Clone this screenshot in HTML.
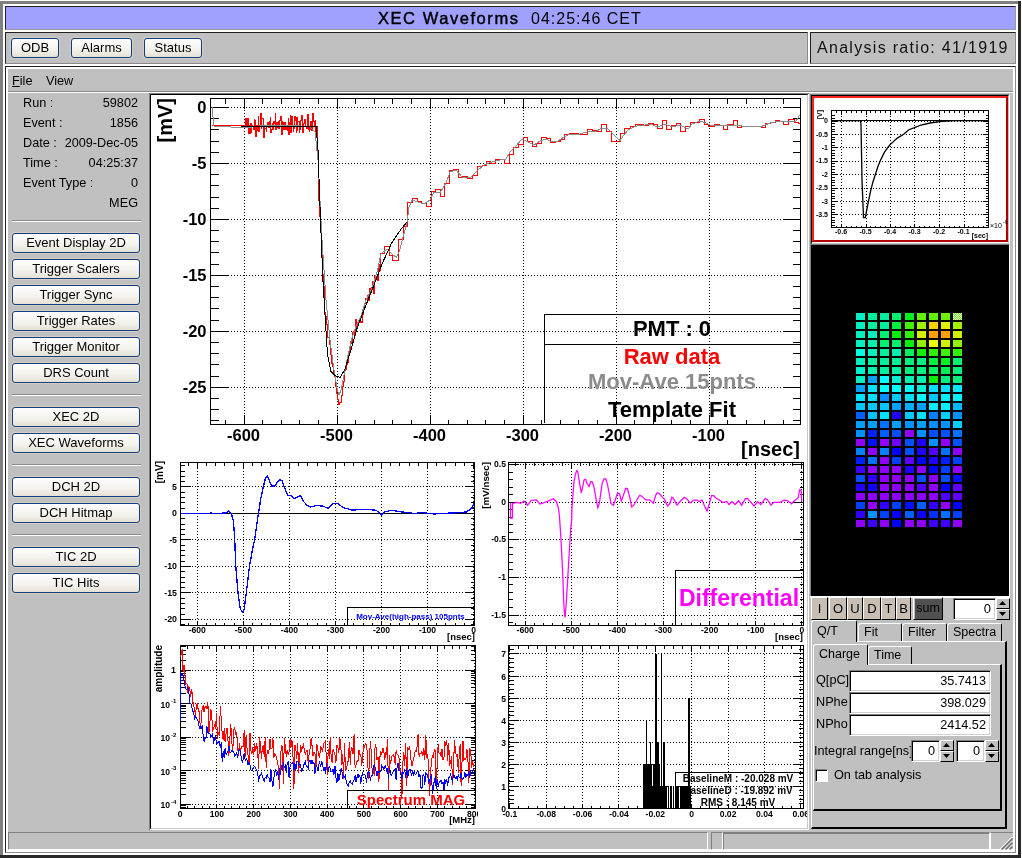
<!DOCTYPE html><html><head><meta charset="utf-8"><style>
*{margin:0;padding:0;box-sizing:border-box}
html,body{width:1022px;height:858px;overflow:hidden;-webkit-font-smoothing:antialiased;background:#c0c0c0;font-family:"Liberation Sans",sans-serif;color:#000}
.a{position:absolute}
.btn{position:absolute;border:1px solid #0f3f7f;border-radius:3px;background:linear-gradient(#ffffff,#f2f1ec 60%,#e6e1d6);box-shadow:0 0 0 1px #d4cfc4;font-size:13px;text-align:center;line-height:18px;white-space:nowrap}
.lbl{position:absolute;font-size:12.7px;white-space:nowrap;line-height:14px}
.sep{position:absolute;height:2px;border-top:1px solid #8a8a8a;border-bottom:1px solid #fff}
svg{position:absolute;left:0;top:0}
body>div,body>svg{will-change:transform}
</style></head><body><div class="a" style="left:0px;top:0px;width:1022px;height:858px;background:#fff"></div><div class="a" style="left:0px;top:1px;width:1021px;height:857px;background:#808080"></div><div class="a" style="left:0px;top:1px;width:1021px;height:857px;border-right:3px solid #282828;border-bottom:3px solid #282828"></div><div class="a" style="left:3px;top:4px;width:1015px;height:851px;background:#fff"></div><div class="a" style="left:5px;top:6px;width:1011px;height:24px;background:#a0a0ff;border-top:1px solid #202020;border-left:1px solid #202020;border-right:1px solid #9a9a9a;border-bottom:1px solid #9a9a9a"></div><div class="a" style="left:378px;top:8px;font-size:16.5px;line-height:20px;white-space:nowrap;color:#000;letter-spacing:1.55px;-webkit-text-stroke:0.45px #000">XEC Waveforms</div><div class="a" style="left:531px;top:9px;font-size:16px;line-height:20px;white-space:nowrap;color:#000;letter-spacing:1.0px">04:25:46 CET</div><div class="a" style="left:5px;top:32px;width:803px;height:32px;background:#c0c0c0;border-top:1px solid #202020;border-left:1px solid #202020;border-right:1px solid #8a8a8a;border-bottom:1px solid #8a8a8a"></div><div class="a" style="left:810px;top:32px;width:206px;height:32px;background:#c0c0c0;border-top:1px solid #202020;border-left:1px solid #202020;border-right:1px solid #8a8a8a;border-bottom:1px solid #8a8a8a"></div><div class="a" style="left:817px;top:38px;font-size:16px;line-height:20px;letter-spacing:1.3px;white-space:nowrap;color:#111">Analysis ratio: 41/1919</div><div class="btn" style="left:11px;top:38px;width:48px;height:20px">ODB</div><div class="btn" style="left:71px;top:38px;width:61px;height:20px">Alarms</div><div class="btn" style="left:144px;top:38px;width:58px;height:20px">Status</div><div class="a" style="left:5px;top:66px;width:1011px;height:787px;background:#fff;border-top:1px solid #202020;border-left:1px solid #202020;border-right:1px solid #8a8a8a;border-bottom:1px solid #8a8a8a"></div><div class="a" style="left:8px;top:69px;width:1005px;height:780px;background:#c0c0c0"></div><div class="a" style="left:8px;top:91px;width:1005px;height:1px;background:#8a8a8a"></div><div class="a" style="left:8px;top:92px;width:1005px;height:1px;background:#fff"></div><div class="lbl" style="left:12px;top:74px;font-size:12.7px"><u>F</u>ile</div><div class="lbl" style="left:46px;top:74px;font-size:12.7px">View</div><div class="lbl" style="left:23px;top:96px">Run :</div><div class="lbl" style="left:40px;top:96px;width:98px;text-align:right">59802</div><div class="lbl" style="left:23px;top:116px">Event :</div><div class="lbl" style="left:40px;top:116px;width:98px;text-align:right">1856</div><div class="lbl" style="left:23px;top:136px">Date :</div><div class="lbl" style="left:40px;top:136px;width:98px;text-align:right">2009-Dec-05</div><div class="lbl" style="left:23px;top:156px">Time :</div><div class="lbl" style="left:40px;top:156px;width:98px;text-align:right">04:25:37</div><div class="lbl" style="left:23px;top:176px">Event Type :</div><div class="lbl" style="left:40px;top:176px;width:98px;text-align:right">0</div><div class="lbl" style="left:23px;top:196px"></div><div class="lbl" style="left:40px;top:196px;width:98px;text-align:right">MEG</div><div class="sep" style="left:12px;top:220px;width:129px"></div><div class="sep" style="left:12px;top:394px;width:129px"></div><div class="sep" style="left:12px;top:464px;width:129px"></div><div class="sep" style="left:12px;top:534px;width:129px"></div><div class="btn" style="left:12px;top:233px;width:128px;height:20px">Event Display 2D</div><div class="btn" style="left:12px;top:259px;width:128px;height:20px">Trigger Scalers</div><div class="btn" style="left:12px;top:285px;width:128px;height:20px">Trigger Sync</div><div class="btn" style="left:12px;top:311px;width:128px;height:20px">Trigger Rates</div><div class="btn" style="left:12px;top:337px;width:128px;height:20px">Trigger Monitor</div><div class="btn" style="left:12px;top:363px;width:128px;height:20px">DRS Count</div><div class="btn" style="left:12px;top:407px;width:128px;height:20px">XEC 2D</div><div class="btn" style="left:12px;top:433px;width:128px;height:20px">XEC Waveforms</div><div class="btn" style="left:12px;top:477px;width:128px;height:20px">DCH 2D</div><div class="btn" style="left:12px;top:503px;width:128px;height:20px">DCH Hitmap</div><div class="btn" style="left:12px;top:547px;width:128px;height:20px">TIC 2D</div><div class="btn" style="left:12px;top:573px;width:128px;height:20px">TIC Hits</div><div class="a" style="left:149px;top:93px;width:660px;height:737px;background:#fff;border-top:1px solid #808080;border-left:1px solid #808080"></div><div class="a" style="left:150px;top:94px;width:658px;height:735px;background:#fff;border-top:1px solid #000;border-left:1px solid #000;border-right:1px solid #c8c8c8;border-bottom:1px solid #c8c8c8"></div><div class="a" style="left:8px;top:832px;width:700px;height:18px;border-top:1px solid #808080;border-left:1px solid #808080;border-right:1px solid #fff;border-bottom:1px solid #fff"></div><div class="a" style="left:711px;top:832px;width:12px;height:18px;border-top:1px solid #808080;border-left:1px solid #808080;border-right:1px solid #fff;border-bottom:1px solid #fff"></div><div class="a" style="left:723px;top:832px;width:267px;height:18px;border-top:2px solid #808080;border-left:1px solid #808080;border-right:1px solid #fff;border-bottom:1px solid #fff"></div><div class="a" style="left:990px;top:832px;width:23px;height:18px;border-top:1px solid #808080;border-left:1px solid #fff"></div><svg width="1022" height="858" style="position:absolute;left:0;top:0"><g stroke-width="1.4" fill="none"><path d="M1000 849.5L1012.5 837M1004.5 849.5L1012.5 841.5M1008.5 849.5L1012.5 845.5" stroke="#fff"/><path d="M1001.5 849.5L1012.5 838.5M1005.5 849.5L1012.5 842.5M1009.5 849.5L1012.5 846.5" stroke="#707070" stroke-width="1.6"/></g></svg><svg width="1022" height="858" viewBox="0 0 1022 858" style="position:absolute;left:0;top:0"><defs><clipPath id="cm"><rect x="151" y="95" width="656" height="364"/></clipPath><clipPath id="c2"><rect x="151" y="459" width="327" height="183"/></clipPath><clipPath id="c3"><rect x="478" y="459" width="329" height="183"/></clipPath><clipPath id="c4"><rect x="151" y="642" width="327" height="186"/></clipPath><clipPath id="c5"><rect x="478" y="642" width="329" height="186"/></clipPath></defs><g shape-rendering="crispEdges"><g clip-path="url(#cm)"><path d="M244.5 98V424M337.5 98V424M430.5 98V424M523.5 98V424M616.5 98V424M709.5 98V424M210 107.5H800M210 163.5H800M210 219.5H800M210 275.5H800M210 331.5H800M210 387.5H800" stroke="#000" stroke-width="1" stroke-dasharray="1,2" fill="none"/><path d="M244.5 424.5v-10M244.5 98.5v10M337.5 424.5v-10M337.5 98.5v10M430.5 424.5v-10M430.5 98.5v10M523.5 424.5v-10M523.5 98.5v10M616.5 424.5v-10M616.5 98.5v10M709.5 424.5v-10M709.5 98.5v10M225.5 424.5v-5M225.5 98.5v5M262.5 424.5v-5M262.5 98.5v5M281.5 424.5v-5M281.5 98.5v5M299.5 424.5v-5M299.5 98.5v5M318.5 424.5v-5M318.5 98.5v5M355.5 424.5v-5M355.5 98.5v5M374.5 424.5v-5M374.5 98.5v5M392.5 424.5v-5M392.5 98.5v5M411.5 424.5v-5M411.5 98.5v5M448.5 424.5v-5M448.5 98.5v5M467.5 424.5v-5M467.5 98.5v5M485.5 424.5v-5M485.5 98.5v5M504.5 424.5v-5M504.5 98.5v5M541.5 424.5v-5M541.5 98.5v5M560.5 424.5v-5M560.5 98.5v5M578.5 424.5v-5M578.5 98.5v5M597.5 424.5v-5M597.5 98.5v5M634.5 424.5v-5M634.5 98.5v5M653.5 424.5v-5M653.5 98.5v5M671.5 424.5v-5M671.5 98.5v5M690.5 424.5v-5M690.5 98.5v5M727.5 424.5v-5M727.5 98.5v5M746.5 424.5v-5M746.5 98.5v5M764.5 424.5v-5M764.5 98.5v5M783.5 424.5v-5M783.5 98.5v5M210.5 107.5h17M800.5 107.5h-17M210.5 163.5h17M800.5 163.5h-17M210.5 219.5h17M800.5 219.5h-17M210.5 275.5h17M800.5 275.5h-17M210.5 331.5h17M800.5 331.5h-17M210.5 387.5h17M800.5 387.5h-17M210.5 118.5h8M800.5 118.5h-8M210.5 129.5h8M800.5 129.5h-8M210.5 141.5h8M800.5 141.5h-8M210.5 152.5h8M800.5 152.5h-8M210.5 174.5h8M800.5 174.5h-8M210.5 185.5h8M800.5 185.5h-8M210.5 197.5h8M800.5 197.5h-8M210.5 208.5h8M800.5 208.5h-8M210.5 230.5h8M800.5 230.5h-8M210.5 241.5h8M800.5 241.5h-8M210.5 252.5h8M800.5 252.5h-8M210.5 264.5h8M800.5 264.5h-8M210.5 286.5h8M800.5 286.5h-8M210.5 297.5h8M800.5 297.5h-8M210.5 308.5h8M800.5 308.5h-8M210.5 320.5h8M800.5 320.5h-8M210.5 342.5h8M800.5 342.5h-8M210.5 353.5h8M800.5 353.5h-8M210.5 364.5h8M800.5 364.5h-8M210.5 376.5h8M800.5 376.5h-8M210.5 398.5h8M800.5 398.5h-8M210.5 409.5h8M800.5 409.5h-8M210.5 420.5h8M800.5 420.5h-8" stroke="#000" stroke-width="1" fill="none"/><rect x="210.5" y="98.5" width="590" height="326" stroke="#000" stroke-width="1" fill="none"/><text x="206.5" y="113.0" font-family="Liberation Sans" font-weight="bold" font-size="16.5" text-anchor="end" fill="#000" >0</text><text x="206.5" y="168.95" font-family="Liberation Sans" font-weight="bold" font-size="16.5" text-anchor="end" fill="#000" >-5</text><text x="206.5" y="224.89999999999998" font-family="Liberation Sans" font-weight="bold" font-size="16.5" text-anchor="end" fill="#000" >-10</text><text x="206.5" y="280.85" font-family="Liberation Sans" font-weight="bold" font-size="16.5" text-anchor="end" fill="#000" >-15</text><text x="206.5" y="336.79999999999995" font-family="Liberation Sans" font-weight="bold" font-size="16.5" text-anchor="end" fill="#000" >-20</text><text x="206.5" y="392.75" font-family="Liberation Sans" font-weight="bold" font-size="16.5" text-anchor="end" fill="#000" >-25</text><text x="243.5" y="441" font-family="Liberation Sans" font-weight="bold" font-size="16.5" text-anchor="middle" fill="#000" >-600</text><text x="336.5" y="441" font-family="Liberation Sans" font-weight="bold" font-size="16.5" text-anchor="middle" fill="#000" >-500</text><text x="429.5" y="441" font-family="Liberation Sans" font-weight="bold" font-size="16.5" text-anchor="middle" fill="#000" >-400</text><text x="522.5" y="441" font-family="Liberation Sans" font-weight="bold" font-size="16.5" text-anchor="middle" fill="#000" >-300</text><text x="615.5" y="441" font-family="Liberation Sans" font-weight="bold" font-size="16.5" text-anchor="middle" fill="#000" >-200</text><text x="708.5" y="441" font-family="Liberation Sans" font-weight="bold" font-size="16.5" text-anchor="middle" fill="#000" >-100</text><text x="0" y="0" transform="translate(172,98) rotate(-90)" font-family="Liberation Sans" font-weight="bold" font-size="20" text-anchor="end" fill="#000" >[mV]</text><text x="800" y="456" font-family="Liberation Sans" font-weight="bold" font-size="20" text-anchor="end" fill="#000" >[nsec]</text><path d="M211.0 125.0 L245.0 126.0 L245.0 118.8 L245.6 118.8 L245.6 127.6 L246.2 127.6 L246.2 118.2 L246.8 118.2 L246.8 125.1 L247.4 125.1 L247.4 118.8 L248.0 118.8 L248.0 118.4 L248.6 118.4 L248.6 133.9 L249.2 133.9 L249.2 125.0 L249.8 125.0 L249.8 133.3 L250.4 133.3 L250.4 123.7 L251.0 123.7 L251.0 132.2 L251.6 132.2 L251.6 126.1 L252.2 126.1 L252.2 125.6 L252.8 125.6 L252.8 126.9 L253.4 126.9 L253.4 129.2 L254.0 129.2 L254.0 119.9 L254.6 119.9 L254.6 122.3 L255.2 122.3 L255.2 120.3 L255.8 120.3 L255.8 136.0 L256.4 136.0 L256.4 125.2 L257.0 125.2 L257.0 126.1 L257.6 126.1 L257.6 130.0 L258.2 130.0 L258.2 116.9 L258.8 116.9 L258.8 131.7 L259.4 131.7 L259.4 125.6 L260.0 125.6 L260.0 125.4 L260.6 125.4 L260.6 113.0 L261.2 113.0 L261.2 128.4 L261.8 128.4 L261.8 118.9 L262.4 118.9 L262.4 118.6 L263.0 118.6 L263.0 118.5 L263.6 118.5 L263.6 137.8 L264.2 137.8 L264.2 125.6 L264.8 125.6 L264.8 128.0 L265.4 128.0 L265.4 128.6 L266.0 128.6 L266.0 131.8 L266.6 131.8 L266.6 125.2 L267.2 125.2 L267.2 122.6 L267.8 122.6 L267.8 122.2 L268.4 122.2 L268.4 127.3 L269.0 127.3 L269.0 127.0 L269.6 127.0 L269.6 121.1 L270.2 121.1 L270.2 117.0 L270.8 117.0 L270.8 132.2 L271.4 132.2 L271.4 129.3 L272.0 129.3 L272.0 125.2 L272.6 125.2 L272.6 123.3 L273.2 123.3 L273.2 129.6 L273.8 129.6 L273.8 121.9 L274.4 121.9 L274.4 123.5 L275.0 123.5 L275.0 113.0 L275.6 113.0 L275.6 129.5 L276.2 129.5 L276.2 127.8 L276.8 127.8 L276.8 122.9 L277.4 122.9 L277.4 127.2 L278.0 127.2 L278.0 121.7 L278.6 121.7 L278.6 128.9 L279.2 128.9 L279.2 124.2 L279.8 124.2 L279.8 120.9 L280.4 120.9 L280.4 116.1 L281.0 116.1 L281.0 126.1 L281.6 126.1 L281.6 134.1 L282.2 134.1 L282.2 121.7 L282.8 121.7 L282.8 122.9 L283.4 122.9 L283.4 129.1 L284.0 129.1 L284.0 127.2 L284.6 127.2 L284.6 122.1 L285.2 122.1 L285.2 122.6 L285.8 122.6 L285.8 129.8 L286.4 129.8 L286.4 126.0 L287.0 126.0 L287.0 127.9 L287.6 127.9 L287.6 130.2 L288.2 130.2 L288.2 118.0 L288.8 118.0 L288.8 134.3 L289.4 134.3 L289.4 122.9 L290.0 122.9 L290.0 115.6 L290.6 115.6 L290.6 132.7 L291.2 132.7 L291.2 116.0 L291.8 116.0 L291.8 116.6 L292.4 116.6 L292.4 126.5 L293.0 126.5 L293.0 131.7 L293.6 131.7 L293.6 128.6 L294.2 128.6 L294.2 124.8 L294.8 124.8 L294.8 116.9 L295.4 116.9 L295.4 120.5 L296.0 120.5 L296.0 132.2 L296.6 132.2 L296.6 117.1 L297.2 117.1 L297.2 130.3 L297.8 130.3 L297.8 121.7 L298.4 121.7 L298.4 121.7 L299.0 121.7 L299.0 132.4 L299.6 132.4 L299.6 129.3 L300.2 129.3 L300.2 124.8 L300.8 124.8 L300.8 120.1 L301.4 120.1 L301.4 115.7 L302.0 115.7 L302.0 129.3 L302.6 129.3 L302.6 132.8 L303.2 132.8 L303.2 126.9 L303.8 126.9 L303.8 123.4 L304.4 123.4 L304.4 119.4 L305.0 119.4 L305.0 125.5 L305.6 125.5 L305.6 126.3 L306.2 126.3 L306.2 126.5 L306.8 126.5 L306.8 128.7 L307.4 128.7 L307.4 114.7 L308.0 114.7 L308.0 129.6 L308.6 129.6 L308.6 127.4 L309.2 127.4 L309.2 131.0 L309.8 131.0 L309.8 129.5 L310.4 129.5 L310.4 121.8 L311.0 121.8 L311.0 129.7 L311.6 129.7 L311.6 130.4 L312.2 130.4 L312.2 122.3 L312.8 122.3 L312.8 113.0 L313.4 113.0 L313.4 121.3 L314.0 121.3 L314.0 126.8 L314.6 126.8 L314.6 121.0 L315.2 121.0 L315.2 120.9 L315.8 120.9 L315.8 131.5 L316.4 131.5 L316.0 126.0 L317.0 126.0 L317.0 150.0 L318.0 150.0 L318.0 200.0 L319.0 200.0 L319.0 216.0 L320.0 216.0 L320.0 232.0 L321.0 232.0 L321.0 251.3 L322.0 251.3 L322.0 274.4 L323.0 274.4 L323.0 286.2 L324.0 286.2 L324.0 312.5 L325.0 312.5 L325.0 316.1 L326.0 316.1 L326.0 324.1 L327.0 324.1 L327.0 337.8 L328.0 337.8 L328.0 337.9 L329.0 337.9 L329.0 344.0 L330.0 344.0 L330.0 354.6 L331.0 354.6 L331.0 363.9 L332.0 363.9 L332.0 366.0 L333.0 366.0 L333.0 374.2 L334.0 374.2 L334.0 376.1 L335.0 376.1 L335.0 386.0 L336.0 386.0 L336.0 393.9 L337.0 393.9 L337.0 399.3 L338.0 399.3 L338.0 404.7 L339.0 404.7 L339.0 402.3 L340.0 402.3 L340.0 402.5 L341.0 402.5 L341.0 395.6 L342.0 395.6 L342.0 386.8 L343.0 386.8 L343.0 381.0 L344.0 381.0 L344.0 370.5 L345.0 370.5 L345.0 369.3 L346.0 369.3 L346.0 364.8 L347.0 364.8 L347.0 362.9 L348.0 362.9 L348.0 353.5 L349.0 353.5 L349.0 351.4 L350.0 351.4 L350.0 341.9 L351.0 341.9 L351.0 343.3 L352.0 343.3 L352.0 332.9 L353.0 332.9 L353.0 331.2 L354.0 331.2 L354.0 335.6 L355.0 335.6 L355.0 319.5 L356.0 319.5 L356.0 327.2 L357.0 327.2 L357.0 324.3 L358.0 324.3 L358.0 320.9 L359.0 320.9 L359.0 322.4 L360.0 322.4 L360.0 321.4 L361.0 321.4 L361.0 322.0 L362.0 322.0 L362.0 314.0 L363.0 314.0 L363.0 308.2 L364.0 308.2 L364.0 303.5 L365.0 303.5 L365.0 298.2 L366.0 298.2 L366.0 299.8 L367.0 299.8 L367.0 295.4 L368.0 295.4 L368.0 300.2 L369.0 300.2 L369.0 288.2 L370.0 288.2 L370.0 289.0 L371.0 289.0 L371.0 287.6 L372.0 287.6 L372.0 281.6 L373.0 281.6 L373.0 293.7 L374.0 293.7 L374.0 275.5 L375.0 275.5 L375.0 279.9 L376.0 279.9 L376.0 276.0 L377.0 276.0 L377.0 280.6 L378.0 280.6 L378.0 264.2 L379.0 264.2 L379.0 270.3 L380.0 270.3 L380.0 253.8 L384.6 253.8 L384.6 246.8 L389.3 246.8 L389.3 255.0 L392.8 255.0 L392.8 260.8 L398.6 260.8 L398.6 239.8 L403.4 239.8 L403.4 226.7 L407.5 226.7 L407.5 202.9 L412.2 202.9 L412.2 198.8 L417.3 198.8 L417.3 201.4 L421.8 201.4 L421.8 203.5 L426.6 203.5 L426.6 206.2 L431.7 206.2 L431.7 191.8 L435.6 191.8 L435.6 189.7 L440.3 189.7 L440.3 196.3 L444.4 196.3 L444.4 183.6 L449.5 183.6 L449.5 170.6 L453.7 170.6 L453.7 169.6 L458.4 169.6 L458.4 177.8 L462.9 177.8 L462.9 176.8 L467.7 176.8 L467.7 178.8 L472.6 178.8 L472.6 175.3 L477.3 175.3 L477.3 166.5 L482.1 166.5 L482.1 165.0 L486.6 165.0 L486.6 161.8 L490.7 161.8 L490.7 163.8 L495.2 163.8 L495.2 159.7 L499.9 159.7 L499.9 159.3 L504.4 159.3 L504.4 163.8 L509.6 163.8 L509.6 154.8 L513.3 154.8 L513.3 147.0 L518.4 147.0 L518.4 144.9 L523.1 144.9 L523.1 137.7 L527.7 137.7 L527.7 141.8 L532.2 141.8 L532.2 146.0 L536.9 146.0 L536.9 143.9 L541.6 143.9 L541.6 137.7 L546.2 137.7 L546.2 138.8 L550.7 138.8 L550.7 142.9 L555.4 142.9 L555.4 141.2 L560.1 141.2 L560.1 139.8 L564.6 139.8 L564.6 134.7 L569.2 134.7 L569.2 133.6 L573.9 133.6 L573.9 133.6 L578.6 133.6 L578.6 134.2 L583.1 134.2 L583.1 134.2 L587.6 134.2 L587.6 129.9 L592.4 129.9 L592.4 130.1 L597.4 130.1 L597.4 131.6 L601.6 131.6 L601.6 124.8 L606.4 124.8 L606.4 131.6 L611.0 131.6 L611.0 141.4 L620.5 141.4 L620.5 133.7 L624.7 133.7 L624.7 128.4 L630.0 128.4 L630.0 126.7 L635.2 126.7 L635.2 124.8 L643.6 124.8 L643.6 125.7 L648.9 125.7 L648.9 123.6 L653.1 123.6 L653.1 124.8 L657.3 124.8 L657.3 128.0 L662.6 128.0 L662.6 120.4 L666.8 120.4 L666.8 129.0 L671.6 129.0 L671.6 125.7 L676.3 125.7 L676.3 123.6 L680.5 123.6 L680.5 131.1 L685.7 131.1 L685.7 126.9 L690.6 126.9 L690.6 122.5 L699.4 122.5 L699.4 119.6 L704.7 119.6 L704.7 124.8 L708.9 124.8 L708.9 126.9 L714.1 126.9 L714.1 124.8 L719.4 124.8 L719.4 125.7 L723.6 125.7 L723.6 129.0 L727.8 129.0 L727.8 124.2 L733.0 124.2 L733.0 120.4 L737.3 120.4 L737.3 127.0 L741.9 127.0 L741.9 126.7 L761.5 126.7 L761.5 127.0 L765.7 127.0 L765.7 123.1 L770.9 123.1 L770.9 122.7 L775.2 122.7 L775.2 120.0 L779.4 120.0 L779.4 121.5 L783.6 121.5 L783.6 124.2 L788.8 124.2 L788.8 119.4 L794.1 119.4 L794.1 122.1 L798.3 122.1 L798.3 123.1 L800.0 123.1" stroke="#ff0000" stroke-width="1" fill="none" shape-rendering="crispEdges"/><path d="M212.5 107.5 L213.5 126.0 L240.0 127.5 L245.0 128.0 L260.0 126.0 L280.0 125.0 L300.0 126.0 L310.0 127.0 L315.0 132.0 L318.0 160.0 L322.0 240.0 L326.0 300.0 L330.0 340.0 L334.0 370.0 L337.0 388.0 L339.0 395.0 L341.0 390.0 L344.0 375.0 L348.0 355.0 L352.0 338.0 L356.0 326.0 L361.0 316.0 L366.0 300.0 L372.0 288.0 L377.6 270.0 L381.0 253.8 L387.0 249.0 L391.6 253.8 L396.2 257.3 L399.7 250.3 L403.2 236.3 L406.7 224.7 L409.0 207.0 L412.0 200.0 L418.0 202.0 L424.0 204.0 L430.0 200.0 L434.0 192.0 L440.0 193.0 L446.0 183.0 L450.0 172.0 L456.0 170.0 L462.0 177.0 L470.0 178.0 L478.0 170.0 L484.0 165.0 L492.0 162.0 L500.0 160.0 L506.0 159.0 L510.0 152.0 L516.0 146.0 L522.0 139.0 L528.0 142.0 L534.0 145.0 L540.0 141.0 L546.0 139.0 L552.0 142.0 L558.0 141.0 L564.0 137.0 L570.0 134.0 L580.0 134.0 L590.0 131.0 L597.0 131.0 L602.0 128.0 L607.0 128.0 L612.0 133.0 L616.0 137.0 L620.0 140.5 L624.0 135.0 L628.0 130.0 L634.0 127.0 L640.0 125.0 L645.0 125.0 L650.0 124.0 L658.0 127.0 L665.0 124.0 L672.0 127.0 L680.0 125.0 L688.0 129.0 L692.0 124.0 L700.0 121.0 L706.0 123.0 L712.0 126.0 L722.0 125.0 L742.0 126.0 L760.0 127.0 L770.0 123.0 L780.0 121.0 L790.0 121.0 L796.0 121.0 L800.0 114.7" stroke="#8c8c8c" stroke-width="1" fill="none" /><path d="M241.0 126.3 L316.0 126.3 L318.0 150.0 L320.5 220.0 L322.8 278.0 L325.2 318.0 L327.5 355.0 L331.0 371.5 L335.6 376.0 L340.3 377.3 L345.0 369.0 L350.8 350.5 L356.6 329.6 L363.6 311.0 L373.0 287.6 L382.0 264.0 L391.6 243.0 L401.0 229.3 L407.0 222.0" stroke="#000" stroke-width="1" fill="none" shape-rendering="crispEdges"/><path d="M544.5 423V314.5H800M544.5 344.5H800" stroke="#000" stroke-width="1" fill="none" shape-rendering="crispEdges"/><text x="672" y="336" font-family="Liberation Sans" font-weight="bold" font-size="22" text-anchor="middle" fill="#000" >PMT : 0</text><text x="672" y="364" font-family="Liberation Sans" font-weight="bold" font-size="22" text-anchor="middle" fill="#ff0000" >Raw data</text><text x="672" y="389" font-family="Liberation Sans" font-weight="bold" font-size="22" text-anchor="middle" fill="#8c8c8c" >Mov-Ave 15pnts</text><text x="672" y="417" font-family="Liberation Sans" font-weight="bold" font-size="22" text-anchor="middle" fill="#000" >Template Fit</text></g><g clip-path="url(#c2)"><path d="M197.5 462V625M243.5 462V625M289.5 462V625M335.5 462V625M381.5 462V625M427.5 462V625M473.5 462V625M180 486.5H474M180 513.5H474M180 539.5H474M180 566.5H474M180 592.5H474M180 619.5H474" stroke="#000" stroke-width="1" stroke-dasharray="1,2" fill="none"/><path d="M197.5 625.5v-5M197.5 462.5v5M243.5 625.5v-5M243.5 462.5v5M289.5 625.5v-5M289.5 462.5v5M335.5 625.5v-5M335.5 462.5v5M381.5 625.5v-5M381.5 462.5v5M427.5 625.5v-5M427.5 462.5v5M473.5 625.5v-5M473.5 462.5v5M188.5 625.5v-3M188.5 462.5v3M206.5 625.5v-3M206.5 462.5v3M215.5 625.5v-3M215.5 462.5v3M224.5 625.5v-3M224.5 462.5v3M234.5 625.5v-3M234.5 462.5v3M252.5 625.5v-3M252.5 462.5v3M261.5 625.5v-3M261.5 462.5v3M270.5 625.5v-3M270.5 462.5v3M280.5 625.5v-3M280.5 462.5v3M298.5 625.5v-3M298.5 462.5v3M307.5 625.5v-3M307.5 462.5v3M317.5 625.5v-3M317.5 462.5v3M326.5 625.5v-3M326.5 462.5v3M344.5 625.5v-3M344.5 462.5v3M353.5 625.5v-3M353.5 462.5v3M363.5 625.5v-3M363.5 462.5v3M372.5 625.5v-3M372.5 462.5v3M390.5 625.5v-3M390.5 462.5v3M399.5 625.5v-3M399.5 462.5v3M409.5 625.5v-3M409.5 462.5v3M418.5 625.5v-3M418.5 462.5v3M436.5 625.5v-3M436.5 462.5v3M445.5 625.5v-3M445.5 462.5v3M455.5 625.5v-3M455.5 462.5v3M464.5 625.5v-3M464.5 462.5v3M180.5 486.5h10M474.5 486.5h-10M180.5 513.5h10M474.5 513.5h-10M180.5 539.5h10M474.5 539.5h-10M180.5 566.5h10M474.5 566.5h-10M180.5 592.5h10M474.5 592.5h-10M180.5 619.5h10M474.5 619.5h-10M180.5 465.5h4M474.5 465.5h-4M180.5 471.5h4M474.5 471.5h-4M180.5 476.5h4M474.5 476.5h-4M180.5 481.5h4M474.5 481.5h-4M180.5 492.5h4M474.5 492.5h-4M180.5 497.5h4M474.5 497.5h-4M180.5 502.5h4M474.5 502.5h-4M180.5 508.5h4M474.5 508.5h-4M180.5 518.5h4M474.5 518.5h-4M180.5 524.5h4M474.5 524.5h-4M180.5 529.5h4M474.5 529.5h-4M180.5 534.5h4M474.5 534.5h-4M180.5 545.5h4M474.5 545.5h-4M180.5 550.5h4M474.5 550.5h-4M180.5 555.5h4M474.5 555.5h-4M180.5 561.5h4M474.5 561.5h-4M180.5 571.5h4M474.5 571.5h-4M180.5 577.5h4M474.5 577.5h-4M180.5 582.5h4M474.5 582.5h-4M180.5 587.5h4M474.5 587.5h-4M180.5 598.5h4M474.5 598.5h-4M180.5 603.5h4M474.5 603.5h-4M180.5 608.5h4M474.5 608.5h-4M180.5 614.5h4M474.5 614.5h-4M180.5 624.5h4M474.5 624.5h-4" stroke="#000" stroke-width="1" fill="none"/><rect x="180.5" y="462.5" width="294" height="163" stroke="#000" stroke-width="1" fill="none"/><text x="177" y="489.7" font-family="Liberation Sans" font-weight="bold" font-size="8.8" text-anchor="end" fill="#000" >5</text><text x="177" y="516.1999999999999" font-family="Liberation Sans" font-weight="bold" font-size="8.8" text-anchor="end" fill="#000" >0</text><text x="177" y="542.6999999999999" font-family="Liberation Sans" font-weight="bold" font-size="8.8" text-anchor="end" fill="#000" >-5</text><text x="177" y="569.1999999999999" font-family="Liberation Sans" font-weight="bold" font-size="8.8" text-anchor="end" fill="#000" >-10</text><text x="177" y="595.6999999999999" font-family="Liberation Sans" font-weight="bold" font-size="8.8" text-anchor="end" fill="#000" >-15</text><text x="177" y="622.1999999999999" font-family="Liberation Sans" font-weight="bold" font-size="8.8" text-anchor="end" fill="#000" >-20</text><text x="197.3" y="633" font-family="Liberation Sans" font-weight="bold" font-size="8.6" text-anchor="middle" fill="#000" >-600</text><text x="243.35000000000002" y="633" font-family="Liberation Sans" font-weight="bold" font-size="8.6" text-anchor="middle" fill="#000" >-500</text><text x="289.4" y="633" font-family="Liberation Sans" font-weight="bold" font-size="8.6" text-anchor="middle" fill="#000" >-400</text><text x="335.45000000000005" y="633" font-family="Liberation Sans" font-weight="bold" font-size="8.6" text-anchor="middle" fill="#000" >-300</text><text x="381.5" y="633" font-family="Liberation Sans" font-weight="bold" font-size="8.6" text-anchor="middle" fill="#000" >-200</text><text x="427.55" y="633" font-family="Liberation Sans" font-weight="bold" font-size="8.6" text-anchor="middle" fill="#000" >-100</text><text x="473.6" y="633" font-family="Liberation Sans" font-weight="bold" font-size="8.6" text-anchor="middle" fill="#000" >0</text><text x="0" y="0" transform="translate(163,461) rotate(-90)" font-family="Liberation Sans" font-weight="bold" font-size="10" text-anchor="end" fill="#000" >[mV]</text><text x="475" y="639.5" font-family="Liberation Sans" font-weight="bold" font-size="9.5" text-anchor="end" fill="#000" >[nsec]</text><path d="M181 513.5H474" stroke="#000" stroke-width="1" shape-rendering="crispEdges"/><path d="M180.5 513.5 L209.7 513.5 L211.0 512.5 L213.0 513.5 L226.0 513.0 L228.6 511.2 L231.2 513.3 L233.5 521.2 L234.7 539.4 L235.8 566.7 L238.0 592.4 L240.3 609.1 L242.6 612.1 L244.1 609.1 L246.4 592.4 L249.4 566.7 L252.4 550.0 L254.7 539.4 L257.0 522.7 L259.2 509.1 L260.5 500.0 L263.0 488.0 L265.5 478.0 L267.6 476.0 L271.5 485.9 L274.7 485.9 L279.6 479.4 L282.0 480.5 L284.5 487.5 L287.7 495.6 L291.0 495.6 L294.2 498.9 L297.5 497.0 L300.7 495.6 L304.0 502.0 L307.2 505.4 L310.4 507.0 L317.0 505.4 L323.5 506.3 L328.3 508.6 L333.2 503.7 L338.0 503.7 L343.0 507.6 L352.7 510.2 L359.0 509.6 L369.0 509.6 L375.5 510.2 L378.7 511.9 L381.9 515.0 L385.0 511.9 L391.7 510.2 L401.4 511.9 L408.0 512.5 L414.4 513.5 L421.0 512.5 L433.9 514.0 L440.0 513.5 L456.6 512.8 L466.4 511.9 L471.3 508.6 L473.9 503.7" stroke="#0000ff" stroke-width="1.3" fill="none" /><path d="M347.5 625V607.5H474" stroke="#000" stroke-width="1" fill="none" shape-rendering="crispEdges"/><text x="410.5" y="619" font-family="Liberation Sans" font-weight="bold" font-size="8" text-anchor="middle" fill="#0000ff" >Mov-Ave(high-pass) 105pnts</text></g><g clip-path="url(#c3)"><path d="M525.5 462V625M571.5 462V625M617.5 462V625M663.5 462V625M709.5 462V625M755.5 462V625M801.5 462V625M508 464.5H803M508 502.5H803M508 539.5H803M508 577.5H803M508 615.5H803" stroke="#000" stroke-width="1" stroke-dasharray="1,2" fill="none"/><path d="M525.5 625.5v-5M525.5 462.5v5M571.5 625.5v-5M571.5 462.5v5M617.5 625.5v-5M617.5 462.5v5M663.5 625.5v-5M663.5 462.5v5M709.5 625.5v-5M709.5 462.5v5M755.5 625.5v-5M755.5 462.5v5M801.5 625.5v-5M801.5 462.5v5M515.5 625.5v-3M515.5 462.5v3M534.5 625.5v-3M534.5 462.5v3M543.5 625.5v-3M543.5 462.5v3M552.5 625.5v-3M552.5 462.5v3M562.5 625.5v-3M562.5 462.5v3M580.5 625.5v-3M580.5 462.5v3M589.5 625.5v-3M589.5 462.5v3M598.5 625.5v-3M598.5 462.5v3M608.5 625.5v-3M608.5 462.5v3M626.5 625.5v-3M626.5 462.5v3M635.5 625.5v-3M635.5 462.5v3M645.5 625.5v-3M645.5 462.5v3M654.5 625.5v-3M654.5 462.5v3M672.5 625.5v-3M672.5 462.5v3M681.5 625.5v-3M681.5 462.5v3M691.5 625.5v-3M691.5 462.5v3M700.5 625.5v-3M700.5 462.5v3M718.5 625.5v-3M718.5 462.5v3M728.5 625.5v-3M728.5 462.5v3M737.5 625.5v-3M737.5 462.5v3M746.5 625.5v-3M746.5 462.5v3M764.5 625.5v-3M764.5 462.5v3M774.5 625.5v-3M774.5 462.5v3M783.5 625.5v-3M783.5 462.5v3M792.5 625.5v-3M792.5 462.5v3M508.5 464.5h10M803.5 464.5h-10M508.5 502.5h10M803.5 502.5h-10M508.5 539.5h10M803.5 539.5h-10M508.5 577.5h10M803.5 577.5h-10M508.5 615.5h10M803.5 615.5h-10M508.5 472.5h4M803.5 472.5h-4M508.5 479.5h4M803.5 479.5h-4M508.5 487.5h4M803.5 487.5h-4M508.5 494.5h4M803.5 494.5h-4M508.5 509.5h4M803.5 509.5h-4M508.5 517.5h4M803.5 517.5h-4M508.5 524.5h4M803.5 524.5h-4M508.5 532.5h4M803.5 532.5h-4M508.5 547.5h4M803.5 547.5h-4M508.5 554.5h4M803.5 554.5h-4M508.5 562.5h4M803.5 562.5h-4M508.5 569.5h4M803.5 569.5h-4M508.5 584.5h4M803.5 584.5h-4M508.5 592.5h4M803.5 592.5h-4M508.5 599.5h4M803.5 599.5h-4M508.5 607.5h4M803.5 607.5h-4M508.5 622.5h4M803.5 622.5h-4" stroke="#000" stroke-width="1" fill="none"/><rect x="508.5" y="462.5" width="295" height="163" stroke="#000" stroke-width="1" fill="none"/><text x="506" y="467.09999999999997" font-family="Liberation Sans" font-weight="bold" font-size="8.6" text-anchor="end" fill="#000" >0.5</text><text x="506" y="504.7" font-family="Liberation Sans" font-weight="bold" font-size="8.6" text-anchor="end" fill="#000" >0</text><text x="506" y="542.3" font-family="Liberation Sans" font-weight="bold" font-size="8.6" text-anchor="end" fill="#000" >-0.5</text><text x="506" y="579.9" font-family="Liberation Sans" font-weight="bold" font-size="8.6" text-anchor="end" fill="#000" >-1</text><text x="506" y="617.5" font-family="Liberation Sans" font-weight="bold" font-size="8.6" text-anchor="end" fill="#000" >-1.5</text><text x="525.1999999999999" y="633" font-family="Liberation Sans" font-weight="bold" font-size="8.6" text-anchor="middle" fill="#000" >-600</text><text x="571.3" y="633" font-family="Liberation Sans" font-weight="bold" font-size="8.6" text-anchor="middle" fill="#000" >-500</text><text x="617.4" y="633" font-family="Liberation Sans" font-weight="bold" font-size="8.6" text-anchor="middle" fill="#000" >-400</text><text x="663.5" y="633" font-family="Liberation Sans" font-weight="bold" font-size="8.6" text-anchor="middle" fill="#000" >-300</text><text x="709.5999999999999" y="633" font-family="Liberation Sans" font-weight="bold" font-size="8.6" text-anchor="middle" fill="#000" >-200</text><text x="755.6999999999999" y="633" font-family="Liberation Sans" font-weight="bold" font-size="8.6" text-anchor="middle" fill="#000" >-100</text><text x="801.8" y="633" font-family="Liberation Sans" font-weight="bold" font-size="8.6" text-anchor="middle" fill="#000" >0</text><text x="0" y="0" transform="translate(489,462) rotate(-90)" font-family="Liberation Sans" font-weight="bold" font-size="9.8" text-anchor="end" fill="#000" >[mV/nsec]</text><text x="803" y="639.5" font-family="Liberation Sans" font-weight="bold" font-size="9.5" text-anchor="end" fill="#000" >[nsec]</text><path d="M510.5 503.0 L510.5 518.0 L512.5 518.0 L512.5 503.4 L517.6 502.3 L520.5 503.4 L524.0 501.1 L527.6 505.2 L531.1 500.5 L536.4 499.9 L539.9 504.0 L543.4 502.9 L548.1 501.1 L553.4 498.7 L556.4 501.7 L558.2 507.0 L559.4 515.2 L560.8 536.2 L562.5 568.7 L564.0 607.7 L565.0 617.4 L566.4 601.2 L568.3 568.7 L570.6 529.7 L571.7 520.0 L572.0 507.0 L572.9 495.2 L574.0 481.7 L575.2 475.3 L576.6 470.6 L577.8 471.7 L578.7 477.6 L579.9 485.2 L581.3 492.9 L582.5 488.2 L584.0 480.0 L585.6 479.4 L587.0 483.5 L589.1 486.4 L590.7 481.7 L592.2 481.7 L593.8 486.4 L595.2 494.0 L596.4 501.1 L597.8 507.6 L599.3 503.4 L600.8 492.9 L602.2 483.5 L604.0 478.8 L605.8 478.8 L607.5 484.7 L609.3 494.0 L611.0 503.4 L613.4 505.2 L615.1 500.5 L617.5 492.9 L619.6 494.0 L621.3 501.1 L623.4 495.2 L625.7 488.2 L627.5 488.8 L629.8 497.6 L631.6 507.0 L633.9 505.2 L637.5 498.7 L639.8 495.2 L642.1 496.4 L645.7 499.9 L649.8 499.9 L653.3 503.4 L655.7 495.2 L657.2 492.8 L659.4 493.5 L662.3 497.2 L664.5 499.4 L667.5 506.0 L669.7 503.8 L671.9 497.2 L673.3 497.9 L677.0 505.2 L680.7 500.8 L684.4 497.2 L686.6 498.6 L690.2 503.0 L693.9 500.1 L697.6 500.1 L699.0 501.6 L702.0 500.1 L704.2 505.2 L707.1 511.1 L709.3 503.8 L711.5 495.7 L713.7 495.7 L716.6 498.6 L719.6 500.1 L722.5 502.3 L726.9 501.6 L729.1 504.5 L732.1 501.6 L735.0 504.5 L738.7 500.8 L741.6 505.2 L745.3 498.6 L747.5 498.6 L750.4 501.6 L754.1 506.0 L757.7 501.6 L760.7 504.5 L765.1 498.6 L767.3 499.4 L771.0 505.2 L773.9 502.3 L779.8 502.3 L784.2 500.1 L787.8 500.8 L791.5 503.8 L794.4 500.8 L798.1 498.0 L799.6 489.8 L801.0 490.5 L801.8 501.6" stroke="#ff00ff" stroke-width="1.25" fill="none" shape-rendering="auto"/><path d="M675.5 625V570.5H803" stroke="#000" stroke-width="1" fill="none" shape-rendering="crispEdges"/><text x="739" y="606" font-family="Liberation Sans" font-weight="bold" font-size="23" text-anchor="middle" fill="#ff00ff" >Differential</text></g><g clip-path="url(#c4)"><path d="M216.5 645V808M253.5 645V808M290.5 645V808M327.5 645V808M363.5 645V808M400.5 645V808M437.5 645V808M474.5 645V808M180 670.5H475M180 703.5H475M180 737.5H475M180 770.5H475M180 804.5H475" stroke="#000" stroke-width="1" stroke-dasharray="1,2" fill="none"/><path d="M180.5 808.5v-5M180.5 645.5v5M216.5 808.5v-5M216.5 645.5v5M253.5 808.5v-5M253.5 645.5v5M290.5 808.5v-5M290.5 645.5v5M327.5 808.5v-5M327.5 645.5v5M363.5 808.5v-5M363.5 645.5v5M400.5 808.5v-5M400.5 645.5v5M437.5 808.5v-5M437.5 645.5v5M474.5 808.5v-5M474.5 645.5v5M187.5 808.5v-3M187.5 645.5v3M194.5 808.5v-3M194.5 645.5v3M202.5 808.5v-3M202.5 645.5v3M209.5 808.5v-3M209.5 645.5v3M224.5 808.5v-3M224.5 645.5v3M231.5 808.5v-3M231.5 645.5v3M239.5 808.5v-3M239.5 645.5v3M246.5 808.5v-3M246.5 645.5v3M261.5 808.5v-3M261.5 645.5v3M268.5 808.5v-3M268.5 645.5v3M275.5 808.5v-3M275.5 645.5v3M283.5 808.5v-3M283.5 645.5v3M297.5 808.5v-3M297.5 645.5v3M305.5 808.5v-3M305.5 645.5v3M312.5 808.5v-3M312.5 645.5v3M319.5 808.5v-3M319.5 645.5v3M334.5 808.5v-3M334.5 645.5v3M341.5 808.5v-3M341.5 645.5v3M349.5 808.5v-3M349.5 645.5v3M356.5 808.5v-3M356.5 645.5v3M371.5 808.5v-3M371.5 645.5v3M378.5 808.5v-3M378.5 645.5v3M386.5 808.5v-3M386.5 645.5v3M393.5 808.5v-3M393.5 645.5v3M408.5 808.5v-3M408.5 645.5v3M415.5 808.5v-3M415.5 645.5v3M422.5 808.5v-3M422.5 645.5v3M430.5 808.5v-3M430.5 645.5v3M444.5 808.5v-3M444.5 645.5v3M452.5 808.5v-3M452.5 645.5v3M459.5 808.5v-3M459.5 645.5v3M466.5 808.5v-3M466.5 645.5v3M180.5 670.5h10M475.5 670.5h-10M180.5 703.5h10M475.5 703.5h-10M180.5 737.5h10M475.5 737.5h-10M180.5 770.5h10M475.5 770.5h-10M180.5 804.5h10M475.5 804.5h-10M180.5 807.5h5M475.5 807.5h-5M180.5 805.5h5M475.5 805.5h-5M180.5 794.5h5M475.5 794.5h-5M180.5 788.5h5M475.5 788.5h-5M180.5 783.5h5M475.5 783.5h-5M180.5 780.5h5M475.5 780.5h-5M180.5 778.5h5M475.5 778.5h-5M180.5 775.5h5M475.5 775.5h-5M180.5 773.5h5M475.5 773.5h-5M180.5 772.5h5M475.5 772.5h-5M180.5 760.5h5M475.5 760.5h-5M180.5 754.5h5M475.5 754.5h-5M180.5 750.5h5M475.5 750.5h-5M180.5 747.5h5M475.5 747.5h-5M180.5 744.5h5M475.5 744.5h-5M180.5 742.5h5M475.5 742.5h-5M180.5 740.5h5M475.5 740.5h-5M180.5 738.5h5M475.5 738.5h-5M180.5 727.5h5M475.5 727.5h-5M180.5 721.5h5M475.5 721.5h-5M180.5 717.5h5M475.5 717.5h-5M180.5 713.5h5M475.5 713.5h-5M180.5 711.5h5M475.5 711.5h-5M180.5 708.5h5M475.5 708.5h-5M180.5 706.5h5M475.5 706.5h-5M180.5 705.5h5M475.5 705.5h-5M180.5 693.5h5M475.5 693.5h-5M180.5 687.5h5M475.5 687.5h-5M180.5 683.5h5M475.5 683.5h-5M180.5 680.5h5M475.5 680.5h-5M180.5 677.5h5M475.5 677.5h-5M180.5 675.5h5M475.5 675.5h-5M180.5 673.5h5M475.5 673.5h-5M180.5 671.5h5M475.5 671.5h-5M180.5 660.5h5M475.5 660.5h-5M180.5 654.5h5M475.5 654.5h-5M180.5 650.5h5M475.5 650.5h-5M180.5 646.5h5M475.5 646.5h-5" stroke="#000" stroke-width="1" fill="none"/><rect x="180.5" y="645.5" width="295" height="163" stroke="#000" stroke-width="1" fill="none"/><text x="176" y="672.8" font-family="Liberation Sans" font-weight="bold" font-size="8.8" text-anchor="end" fill="#000" >1</text><text x="170" y="707.75" font-family="Liberation Sans" font-weight="bold" font-size="8.6" text-anchor="end">10</text><text x="171" y="703.25" font-family="Liberation Sans" font-weight="bold" font-size="6" text-anchor="start">-1</text><text x="170" y="741.1999999999999" font-family="Liberation Sans" font-weight="bold" font-size="8.6" text-anchor="end">10</text><text x="171" y="736.6999999999999" font-family="Liberation Sans" font-weight="bold" font-size="6" text-anchor="start">-2</text><text x="170" y="774.65" font-family="Liberation Sans" font-weight="bold" font-size="8.6" text-anchor="end">10</text><text x="171" y="770.15" font-family="Liberation Sans" font-weight="bold" font-size="6" text-anchor="start">-3</text><text x="170" y="808.0999999999999" font-family="Liberation Sans" font-weight="bold" font-size="8.6" text-anchor="end">10</text><text x="171" y="803.5999999999999" font-family="Liberation Sans" font-weight="bold" font-size="6" text-anchor="start">-4</text><text x="180.2" y="817" font-family="Liberation Sans" font-weight="bold" font-size="8.6" text-anchor="middle" fill="#000" >0</text><text x="216.95" y="817" font-family="Liberation Sans" font-weight="bold" font-size="8.6" text-anchor="middle" fill="#000" >100</text><text x="253.7" y="817" font-family="Liberation Sans" font-weight="bold" font-size="8.6" text-anchor="middle" fill="#000" >200</text><text x="290.45" y="817" font-family="Liberation Sans" font-weight="bold" font-size="8.6" text-anchor="middle" fill="#000" >300</text><text x="327.2" y="817" font-family="Liberation Sans" font-weight="bold" font-size="8.6" text-anchor="middle" fill="#000" >400</text><text x="363.95" y="817" font-family="Liberation Sans" font-weight="bold" font-size="8.6" text-anchor="middle" fill="#000" >500</text><text x="400.7" y="817" font-family="Liberation Sans" font-weight="bold" font-size="8.6" text-anchor="middle" fill="#000" >600</text><text x="437.45" y="817" font-family="Liberation Sans" font-weight="bold" font-size="8.6" text-anchor="middle" fill="#000" >700</text><text x="474.2" y="817" font-family="Liberation Sans" font-weight="bold" font-size="8.6" text-anchor="middle" fill="#000" >800</text><text x="0" y="0" transform="translate(162,645) rotate(-90)" font-family="Liberation Sans" font-weight="bold" font-size="10" text-anchor="end" fill="#000" >amplitude</text><text x="475" y="823" font-family="Liberation Sans" font-weight="bold" font-size="9.5" text-anchor="end" fill="#000" >[MHz]</text><path d="M180.2 656.7 L181.2 655.0 L182.1 649.3 L183.1 672.1 L184.0 665.3 L185.0 675.8 L185.9 684.4 L186.9 683.1 L187.8 693.3 L188.8 686.0 L189.8 689.5 L190.7 696.7 L191.7 688.8 L192.6 699.6 L193.6 706.6 L194.5 708.0 L195.5 716.6 L196.4 704.9 L197.4 703.9 L198.4 711.3 L199.3 711.3 L200.3 728.0 L201.2 721.5 L202.2 707.8 L203.1 705.7 L204.1 712.2 L205.0 707.5 L206.0 706.4 L207.0 708.6 L207.9 702.3 L208.9 732.7 L209.8 723.6 L210.8 708.9 L211.7 715.2 L212.7 730.8 L213.6 729.2 L214.6 724.3 L215.6 728.5 L216.5 713.1 L217.5 739.3 L218.4 732.1 L219.4 735.5 L220.3 706.2 L221.3 719.8 L222.2 733.4 L223.2 740.3 L224.2 728.5 L225.1 742.4 L226.1 733.5 L227.0 727.7 L228.0 741.3 L228.9 755.5 L229.9 738.2 L230.8 724.2 L231.8 742.1 L232.8 750.3 L233.7 730.6 L234.7 727.1 L235.6 735.1 L236.6 732.2 L237.5 745.7 L238.5 756.3 L239.4 742.8 L240.4 752.1 L241.4 746.7 L242.3 747.0 L243.3 746.6 L244.2 730.1 L245.2 756.7 L246.1 735.0 L247.1 749.5 L248.0 755.2 L249.0 764.7 L250.0 732.7 L250.9 750.7 L251.9 754.3 L252.8 747.0 L253.8 755.2 L254.7 743.0 L255.7 751.3 L256.6 743.5 L257.6 750.1 L258.6 769.2 L259.5 736.6 L260.5 745.1 L261.4 759.0 L262.4 746.7 L263.3 746.1 L264.3 757.2 L265.2 737.3 L266.2 767.8 L267.2 750.4 L268.1 754.0 L269.1 750.0 L270.0 739.0 L271.0 748.5 L271.9 749.1 L272.9 737.7 L273.8 757.7 L274.8 753.6 L275.7 754.7 L276.7 759.0 L277.7 761.1 L278.6 771.2 L279.6 788.5 L280.5 756.6 L281.5 745.8 L282.4 746.5 L283.4 784.4 L284.3 738.5 L285.3 746.4 L286.3 756.6 L287.2 750.0 L288.2 755.2 L289.1 752.0 L290.1 739.3 L291.0 747.6 L292.0 740.5 L292.9 752.9 L293.9 789.4 L294.9 744.8 L295.8 748.6 L296.8 759.3 L297.7 742.8 L298.7 773.4 L299.6 758.3 L300.6 744.9 L301.5 750.4 L302.5 748.1 L303.5 743.5 L304.4 752.0 L305.4 753.9 L306.3 751.1 L307.3 750.7 L308.2 763.0 L309.2 753.1 L310.1 748.3 L311.1 738.4 L312.1 746.2 L313.0 756.2 L314.0 752.3 L314.9 752.2 L315.9 770.4 L316.8 743.8 L317.8 749.7 L318.7 755.1 L319.7 756.9 L320.7 745.8 L321.6 748.8 L322.6 751.6 L323.5 743.3 L324.5 742.3 L325.4 741.3 L326.4 757.9 L327.3 775.1 L328.3 749.0 L329.3 759.3 L330.2 737.0 L331.2 757.3 L332.1 762.9 L333.1 749.2 L334.0 751.6 L335.0 754.5 L335.9 762.6 L336.9 745.3 L337.9 747.6 L338.8 753.0 L339.8 737.7 L340.7 742.7 L341.7 764.8 L342.6 753.9 L343.6 778.6 L344.5 742.9 L345.5 770.5 L346.5 769.9 L347.4 763.2 L348.4 760.5 L349.3 742.1 L350.3 764.5 L351.2 747.7 L352.2 748.8 L353.1 754.2 L354.1 734.2 L355.1 768.0 L356.0 765.1 L357.0 760.7 L357.9 761.9 L358.9 749.9 L359.8 754.2 L360.8 754.5 L361.7 766.0 L362.7 755.2 L363.7 744.8 L364.6 747.1 L365.6 742.7 L366.5 746.6 L367.5 754.1 L368.4 779.2 L369.4 762.1 L370.3 741.0 L371.3 751.7 L372.3 774.5 L373.2 767.9 L374.2 775.9 L375.1 744.6 L376.1 747.5 L377.0 760.1 L378.0 756.6 L378.9 782.0 L379.9 757.1 L380.9 751.5 L381.8 755.0 L382.8 747.7 L383.7 750.1 L384.7 760.0 L385.6 753.0 L386.6 754.1 L387.5 739.3 L388.5 790.2 L389.5 754.7 L390.4 764.4 L391.4 758.2 L392.3 755.3 L393.3 754.6 L394.2 757.0 L395.2 764.6 L396.1 750.5 L397.1 754.4 L398.1 755.1 L399.0 758.2 L400.0 770.4 L400.9 769.0 L401.9 798.1 L402.8 762.9 L403.8 751.9 L404.7 766.0 L405.7 743.5 L406.7 786.0 L407.6 746.9 L408.6 749.3 L409.5 747.0 L410.5 752.7 L411.4 765.2 L412.4 765.3 L413.3 759.6 L414.3 756.2 L415.3 750.2 L416.2 751.3 L417.2 746.0 L418.1 734.2 L419.1 756.7 L420.0 753.2 L421.0 753.7 L421.9 751.4 L422.9 755.7 L423.9 748.2 L424.8 759.9 L425.8 734.8 L426.7 757.8 L427.7 753.8 L428.6 769.0 L429.6 796.4 L430.5 774.1 L431.5 759.7 L432.5 756.2 L433.4 757.4 L434.4 749.3 L435.3 750.4 L436.3 787.5 L437.2 763.0 L438.2 744.0 L439.1 753.8 L440.1 752.6 L441.1 756.8 L442.0 749.2 L443.0 759.9 L443.9 759.1 L444.9 741.5 L445.8 746.2 L446.8 739.8 L447.7 760.7 L448.7 743.5 L449.7 764.5 L450.6 763.3 L451.6 756.5 L452.5 784.8 L453.5 769.0 L454.4 740.2 L455.4 749.0 L456.3 755.9 L457.3 753.6 L458.3 772.9 L459.2 755.4 L460.2 744.1 L461.1 786.3 L462.1 759.7 L463.0 740.9 L464.0 760.2 L464.9 758.6 L465.9 759.3 L466.9 749.0 L467.8 756.2 L468.8 782.8 L469.7 749.1 L470.7 749.8 L471.6 767.5 L472.6 760.6 L473.5 766.8" stroke="#ff0000" stroke-width="1" fill="none" /><path d="M180.2 720.5 L180.2 671.7 L181.2 675.1 L182.1 673.6 L183.1 676.1 L184.0 680.7 L185.0 686.1 L185.9 688.9 L186.9 689.3 L187.8 687.3 L188.8 691.1 L189.8 702.8 L190.7 703.4 L191.7 706.3 L192.6 711.7 L193.6 711.8 L194.5 718.8 L195.5 717.0 L196.4 717.9 L197.4 720.2 L198.4 721.8 L199.3 728.4 L200.3 727.1 L201.2 728.7 L202.2 725.2 L203.1 735.0 L204.1 741.5 L205.0 737.5 L206.0 738.3 L207.0 726.5 L207.9 732.4 L208.9 733.2 L209.8 733.7 L210.8 736.9 L211.7 735.7 L212.7 734.1 L213.6 743.9 L214.6 737.7 L215.6 735.8 L216.5 743.8 L217.5 743.5 L218.4 741.8 L219.4 741.3 L220.3 747.8 L221.3 742.4 L222.2 762.3 L223.2 750.8 L224.2 758.2 L225.1 748.3 L226.1 755.0 L227.0 752.7 L228.0 750.9 L228.9 745.6 L229.9 751.8 L230.8 752.2 L231.8 750.3 L232.8 751.5 L233.7 751.6 L234.7 756.1 L235.6 755.7 L236.6 753.0 L237.5 755.9 L238.5 752.1 L239.4 749.4 L240.4 750.5 L241.4 758.7 L242.3 762.1 L243.3 758.6 L244.2 753.0 L245.2 760.5 L246.1 758.5 L247.1 760.5 L248.0 765.1 L249.0 762.4 L250.0 764.6 L250.9 769.9 L251.9 770.4 L252.8 768.3 L253.8 767.1 L254.7 766.2 L255.7 768.4 L256.6 770.0 L257.6 772.5 L258.6 781.7 L259.5 775.3 L260.5 775.8 L261.4 772.4 L262.4 776.5 L263.3 779.1 L264.3 781.0 L265.2 777.0 L266.2 778.3 L267.2 773.7 L268.1 777.2 L269.1 778.4 L270.0 782.1 L271.0 769.4 L271.9 780.3 L272.9 787.4 L273.8 778.8 L274.8 771.5 L275.7 770.0 L276.7 775.9 L277.7 771.2 L278.6 779.8 L279.6 768.4 L280.5 775.0 L281.5 764.9 L282.4 770.4 L283.4 762.3 L284.3 767.2 L285.3 765.7 L286.3 772.8 L287.2 763.5 L288.2 762.5 L289.1 778.0 L290.1 765.6 L291.0 763.9 L292.0 762.8 L292.9 762.7 L293.9 770.0 L294.9 762.8 L295.8 770.9 L296.8 761.3 L297.7 761.0 L298.7 765.0 L299.6 764.5 L300.6 764.5 L301.5 771.4 L302.5 770.8 L303.5 765.2 L304.4 763.8 L305.4 761.8 L306.3 766.6 L307.3 766.6 L308.2 768.8 L309.2 760.9 L310.1 760.4 L311.1 764.1 L312.1 760.2 L313.0 764.0 L314.0 762.5 L314.9 773.8 L315.9 767.1 L316.8 765.5 L317.8 771.1 L318.7 765.2 L319.7 762.1 L320.7 767.1 L321.6 761.7 L322.6 762.9 L323.5 770.9 L324.5 766.6 L325.4 773.8 L326.4 762.8 L327.3 770.0 L328.3 770.8 L329.3 765.7 L330.2 769.0 L331.2 772.0 L332.1 771.7 L333.1 768.9 L334.0 774.7 L335.0 765.6 L335.9 777.3 L336.9 782.9 L337.9 772.8 L338.8 780.5 L339.8 776.1 L340.7 769.7 L341.7 768.5 L342.6 777.9 L343.6 775.9 L344.5 777.4 L345.5 775.5 L346.5 783.6 L347.4 784.6 L348.4 786.0 L349.3 781.6 L350.3 780.8 L351.2 783.1 L352.2 784.5 L353.1 781.5 L354.1 779.6 L355.1 775.5 L356.0 782.1 L357.0 777.6 L357.9 773.7 L358.9 777.6 L359.8 775.8 L360.8 783.6 L361.7 776.5 L362.7 773.5 L363.7 774.8 L364.6 774.4 L365.6 775.4 L366.5 782.9 L367.5 773.9 L368.4 771.5 L369.4 772.4 L370.3 781.2 L371.3 776.0 L372.3 775.9 L373.2 769.0 L374.2 764.2 L375.1 767.6 L376.1 771.7 L377.0 775.7 L378.0 770.8 L378.9 772.3 L379.9 771.7 L380.9 770.8 L381.8 765.3 L382.8 767.1 L383.7 769.1 L384.7 767.1 L385.6 765.6 L386.6 770.8 L387.5 768.8 L388.5 778.8 L389.5 768.1 L390.4 774.0 L391.4 775.1 L392.3 773.4 L393.3 771.8 L394.2 771.0 L395.2 768.3 L396.1 779.6 L397.1 766.4 L398.1 763.3 L399.0 770.8 L400.0 770.7 L400.9 773.3 L401.9 778.8 L402.8 772.5 L403.8 773.2 L404.7 769.1 L405.7 778.2 L406.7 768.0 L407.6 778.2 L408.6 771.5 L409.5 769.5 L410.5 769.7 L411.4 775.7 L412.4 771.6 L413.3 774.9 L414.3 771.2 L415.3 774.6 L416.2 773.9 L417.2 771.3 L418.1 771.8 L419.1 777.0 L420.0 774.5 L421.0 787.6 L421.9 789.0 L422.9 775.7 L423.9 774.6 L424.8 784.8 L425.8 773.2 L426.7 774.3 L427.7 775.0 L428.6 784.0 L429.6 779.7 L430.5 777.4 L431.5 775.4 L432.5 793.9 L433.4 787.2 L434.4 779.7 L435.3 777.9 L436.3 789.2 L437.2 778.6 L438.2 786.5 L439.1 782.4 L440.1 781.2 L441.1 780.8 L442.0 783.8 L443.0 782.4 L443.9 791.1 L444.9 779.2 L445.8 782.9 L446.8 779.5 L447.7 786.2 L448.7 777.5 L449.7 777.5 L450.6 774.2 L451.6 777.9 L452.5 782.9 L453.5 774.3 L454.4 775.2 L455.4 779.3 L456.3 775.9 L457.3 780.5 L458.3 773.8 L459.2 777.6 L460.2 777.2 L461.1 773.1 L462.1 779.4 L463.0 778.4 L464.0 776.9 L464.9 772.2 L465.9 777.3 L466.9 774.8 L467.8 775.4 L468.8 771.2 L469.7 778.4 L470.7 771.2 L471.6 770.2 L472.6 773.0 L473.5 768.3" stroke="#0000ff" stroke-width="1" fill="none" /><path d="M347.5 808V790.5H475" stroke="#000" stroke-width="1" fill="none" shape-rendering="crispEdges"/><text x="411" y="805" font-family="Liberation Sans" font-weight="bold" font-size="15" text-anchor="middle" fill="#ff0000" >Spectrum MAG</text></g><g clip-path="url(#c5)"><path d="M509.5 645V808M546.5 645V808M582.5 645V808M618.5 645V808M655.5 645V808M691.5 645V808M728.5 645V808M764.5 645V808M800.5 645V808M508 786.5H803M508 764.5H803M508 742.5H803M508 720.5H803M508 698.5H803M508 676.5H803M508 653.5H803" stroke="#000" stroke-width="1" stroke-dasharray="1,2" fill="none"/><path d="M509.5 808.5v-5M509.5 645.5v5M546.5 808.5v-5M546.5 645.5v5M582.5 808.5v-5M582.5 645.5v5M618.5 808.5v-5M618.5 645.5v5M655.5 808.5v-5M655.5 645.5v5M691.5 808.5v-5M691.5 645.5v5M728.5 808.5v-5M728.5 645.5v5M764.5 808.5v-5M764.5 645.5v5M800.5 808.5v-5M800.5 645.5v5M518.5 808.5v-3M518.5 645.5v3M528.5 808.5v-3M528.5 645.5v3M537.5 808.5v-3M537.5 645.5v3M555.5 808.5v-3M555.5 645.5v3M564.5 808.5v-3M564.5 645.5v3M573.5 808.5v-3M573.5 645.5v3M591.5 808.5v-3M591.5 645.5v3M600.5 808.5v-3M600.5 645.5v3M609.5 808.5v-3M609.5 645.5v3M628.5 808.5v-3M628.5 645.5v3M637.5 808.5v-3M637.5 645.5v3M646.5 808.5v-3M646.5 645.5v3M664.5 808.5v-3M664.5 645.5v3M673.5 808.5v-3M673.5 645.5v3M682.5 808.5v-3M682.5 645.5v3M700.5 808.5v-3M700.5 645.5v3M709.5 808.5v-3M709.5 645.5v3M718.5 808.5v-3M718.5 645.5v3M737.5 808.5v-3M737.5 645.5v3M746.5 808.5v-3M746.5 645.5v3M755.5 808.5v-3M755.5 645.5v3M773.5 808.5v-3M773.5 645.5v3M782.5 808.5v-3M782.5 645.5v3M791.5 808.5v-3M791.5 645.5v3M508.5 808.5h10M803.5 808.5h-10M508.5 786.5h10M803.5 786.5h-10M508.5 764.5h10M803.5 764.5h-10M508.5 742.5h10M803.5 742.5h-10M508.5 720.5h10M803.5 720.5h-10M508.5 698.5h10M803.5 698.5h-10M508.5 676.5h10M803.5 676.5h-10M508.5 653.5h10M803.5 653.5h-10M508.5 803.5h5M803.5 803.5h-5M508.5 799.5h5M803.5 799.5h-5M508.5 795.5h5M803.5 795.5h-5M508.5 790.5h5M803.5 790.5h-5M508.5 781.5h5M803.5 781.5h-5M508.5 777.5h5M803.5 777.5h-5M508.5 773.5h5M803.5 773.5h-5M508.5 768.5h5M803.5 768.5h-5M508.5 759.5h5M803.5 759.5h-5M508.5 755.5h5M803.5 755.5h-5M508.5 750.5h5M803.5 750.5h-5M508.5 746.5h5M803.5 746.5h-5M508.5 737.5h5M803.5 737.5h-5M508.5 733.5h5M803.5 733.5h-5M508.5 728.5h5M803.5 728.5h-5M508.5 724.5h5M803.5 724.5h-5M508.5 715.5h5M803.5 715.5h-5M508.5 711.5h5M803.5 711.5h-5M508.5 706.5h5M803.5 706.5h-5M508.5 702.5h5M803.5 702.5h-5M508.5 693.5h5M803.5 693.5h-5M508.5 689.5h5M803.5 689.5h-5M508.5 684.5h5M803.5 684.5h-5M508.5 680.5h5M803.5 680.5h-5M508.5 671.5h5M803.5 671.5h-5M508.5 667.5h5M803.5 667.5h-5M508.5 662.5h5M803.5 662.5h-5M508.5 658.5h5M803.5 658.5h-5M508.5 649.5h5M803.5 649.5h-5" stroke="#000" stroke-width="1" fill="none"/><rect x="508.5" y="645.5" width="295" height="163" stroke="#000" stroke-width="1" fill="none"/><text x="506" y="811.8" font-family="Liberation Sans" font-weight="bold" font-size="8.6" text-anchor="end" fill="#000" >0</text><text x="506" y="789.75" font-family="Liberation Sans" font-weight="bold" font-size="8.6" text-anchor="end" fill="#000" >1</text><text x="506" y="767.6999999999999" font-family="Liberation Sans" font-weight="bold" font-size="8.6" text-anchor="end" fill="#000" >2</text><text x="506" y="745.65" font-family="Liberation Sans" font-weight="bold" font-size="8.6" text-anchor="end" fill="#000" >3</text><text x="506" y="723.5999999999999" font-family="Liberation Sans" font-weight="bold" font-size="8.6" text-anchor="end" fill="#000" >4</text><text x="506" y="701.55" font-family="Liberation Sans" font-weight="bold" font-size="8.6" text-anchor="end" fill="#000" >5</text><text x="506" y="679.5" font-family="Liberation Sans" font-weight="bold" font-size="8.6" text-anchor="end" fill="#000" >6</text><text x="506" y="657.4499999999999" font-family="Liberation Sans" font-weight="bold" font-size="8.6" text-anchor="end" fill="#000" >7</text><text x="509.90000000000003" y="817" font-family="Liberation Sans" font-weight="bold" font-size="8.6" text-anchor="middle" fill="#000" >-0.1</text><text x="546.26" y="817" font-family="Liberation Sans" font-weight="bold" font-size="8.6" text-anchor="middle" fill="#000" >-0.08</text><text x="582.62" y="817" font-family="Liberation Sans" font-weight="bold" font-size="8.6" text-anchor="middle" fill="#000" >-0.06</text><text x="618.98" y="817" font-family="Liberation Sans" font-weight="bold" font-size="8.6" text-anchor="middle" fill="#000" >-0.04</text><text x="655.34" y="817" font-family="Liberation Sans" font-weight="bold" font-size="8.6" text-anchor="middle" fill="#000" >-0.02</text><text x="691.7" y="817" font-family="Liberation Sans" font-weight="bold" font-size="8.6" text-anchor="middle" fill="#000" >0</text><text x="728.0600000000001" y="817" font-family="Liberation Sans" font-weight="bold" font-size="8.6" text-anchor="middle" fill="#000" >0.02</text><text x="764.4200000000001" y="817" font-family="Liberation Sans" font-weight="bold" font-size="8.6" text-anchor="middle" fill="#000" >0.04</text><text x="800.7800000000001" y="817" font-family="Liberation Sans" font-weight="bold" font-size="8.6" text-anchor="middle" fill="#000" >0.06</text><path d="M643 764H644V808H643ZM644 764H645V808H644ZM645 764H646V808H645ZM646 720H647V808H646ZM647 764H648V808H647ZM648 764H649V808H648ZM649 764H650V808H649ZM650 742H651V808H650ZM651 764H652V808H651ZM652 786H653V808H652ZM653 764H654V808H653ZM654 764H655V808H654ZM655 654H656V808H655ZM656 654H657V808H656ZM657 742H658V808H657ZM658 742H659V808H658ZM659 764H660V808H659ZM660 786H661V808H660ZM661 654H662V808H661ZM662 786H663V808H662ZM663 742H664V808H663ZM664 742H665V808H664ZM665 786H666V808H665ZM666 786H667V808H666ZM668 786H669V808H668ZM670 786H671V808H670ZM671 786H672V808H671ZM673 786H674V808H673ZM676 786H677V808H676ZM677 786H678V808H677ZM678 786H679V808H678ZM680 786H681V808H680ZM681 786H682V808H681ZM682 786H683V808H682ZM683 786H684V808H683ZM684 786H685V808H684ZM685 786H686V808H685ZM686 786H687V808H686ZM687 786H688V808H687ZM688 698H689V808H688ZM689 698H690V808H689ZM690 786H691V808H690Z" fill="#000" shape-rendering="crispEdges"/><path d="M675.5 808V772.5H803" stroke="#000" stroke-width="1" fill="none" shape-rendering="crispEdges"/><rect x="676" y="773" width="127" height="35" fill="#fff" opacity="0"/><text x="738" y="782" font-family="Liberation Sans" font-weight="bold" font-size="10" text-anchor="middle" fill="#000" >BaselineM : -20.028 mV</text><text x="738" y="794" font-family="Liberation Sans" font-weight="bold" font-size="10" text-anchor="middle" fill="#000" >BaselineD : -19.892 mV</text><text x="738" y="805.5" font-family="Liberation Sans" font-weight="bold" font-size="10" text-anchor="middle" fill="#000" >RMS : 8.145 mV</text></g></g></svg><div class="a" style="left:810px;top:94px;width:200px;height:151px;background:#fff;border-top:1px solid #808080;border-left:1px solid #808080;border-right:1px solid #fff;border-bottom:1px solid #fff"></div><div class="a" style="left:811px;top:95px;width:198px;height:149px;border-top:1px solid #000;border-left:1px solid #000;border-right:1px solid #c0c0c0;border-bottom:1px solid #c0c0c0"></div><div class="a" style="left:812px;top:96px;width:196px;height:146px;background:#fff;border-top:2px solid #ff2020;border-left:2px solid #ff2020;border-right:2px solid #b00000;border-bottom:2px solid #b00000"></div><svg width="1022" height="858" style="position:absolute;left:0;top:0"><g shape-rendering="crispEdges"><path d="M841.5 110V227M866.5 110V227M890.5 110V227M914.5 110V227M939.5 110V227M964.5 110V227M831 121.5H988M831 134.5H988M831 147.5H988M831 161.5H988M831 174.5H988M831 188.5H988M831 201.5H988M831 214.5H988" stroke="#000" stroke-dasharray="1,2" fill="none"/><path d="M831.5 227.5v-2M831.5 110.5v2M836.5 227.5v-2M836.5 110.5v2M841.5 227.5v-4M841.5 110.5v4M846.5 227.5v-2M846.5 110.5v2M851.5 227.5v-2M851.5 110.5v2M856.5 227.5v-2M856.5 110.5v2M861.5 227.5v-2M861.5 110.5v2M866.5 227.5v-4M866.5 110.5v4M870.5 227.5v-2M870.5 110.5v2M875.5 227.5v-2M875.5 110.5v2M880.5 227.5v-2M880.5 110.5v2M885.5 227.5v-2M885.5 110.5v2M890.5 227.5v-4M890.5 110.5v4M895.5 227.5v-2M895.5 110.5v2M900.5 227.5v-2M900.5 110.5v2M905.5 227.5v-2M905.5 110.5v2M910.5 227.5v-2M910.5 110.5v2M914.5 227.5v-4M914.5 110.5v4M919.5 227.5v-2M919.5 110.5v2M924.5 227.5v-2M924.5 110.5v2M929.5 227.5v-2M929.5 110.5v2M934.5 227.5v-2M934.5 110.5v2M939.5 227.5v-4M939.5 110.5v4M944.5 227.5v-2M944.5 110.5v2M949.5 227.5v-2M949.5 110.5v2M954.5 227.5v-2M954.5 110.5v2M959.5 227.5v-2M959.5 110.5v2M964.5 227.5v-4M964.5 110.5v4M968.5 227.5v-2M968.5 110.5v2M973.5 227.5v-2M973.5 110.5v2M978.5 227.5v-2M978.5 110.5v2M983.5 227.5v-2M983.5 110.5v2M831.5 115.5h3M988.5 115.5h-3M831.5 118.5h3M988.5 118.5h-3M831.5 121.5h6M988.5 121.5h-6M831.5 123.5h3M988.5 123.5h-3M831.5 126.5h3M988.5 126.5h-3M831.5 129.5h3M988.5 129.5h-3M831.5 131.5h3M988.5 131.5h-3M831.5 134.5h6M988.5 134.5h-6M831.5 137.5h3M988.5 137.5h-3M831.5 139.5h3M988.5 139.5h-3M831.5 142.5h3M988.5 142.5h-3M831.5 145.5h3M988.5 145.5h-3M831.5 147.5h6M988.5 147.5h-6M831.5 150.5h3M988.5 150.5h-3M831.5 153.5h3M988.5 153.5h-3M831.5 155.5h3M988.5 155.5h-3M831.5 158.5h3M988.5 158.5h-3M831.5 161.5h6M988.5 161.5h-6M831.5 163.5h3M988.5 163.5h-3M831.5 166.5h3M988.5 166.5h-3M831.5 169.5h3M988.5 169.5h-3M831.5 172.5h3M988.5 172.5h-3M831.5 174.5h6M988.5 174.5h-6M831.5 177.5h3M988.5 177.5h-3M831.5 180.5h3M988.5 180.5h-3M831.5 182.5h3M988.5 182.5h-3M831.5 185.5h3M988.5 185.5h-3M831.5 188.5h6M988.5 188.5h-6M831.5 190.5h3M988.5 190.5h-3M831.5 193.5h3M988.5 193.5h-3M831.5 196.5h3M988.5 196.5h-3M831.5 198.5h3M988.5 198.5h-3M831.5 201.5h6M988.5 201.5h-6M831.5 204.5h3M988.5 204.5h-3M831.5 206.5h3M988.5 206.5h-3M831.5 209.5h3M988.5 209.5h-3M831.5 212.5h3M988.5 212.5h-3M831.5 214.5h6M988.5 214.5h-6M831.5 217.5h3M988.5 217.5h-3M831.5 220.5h3M988.5 220.5h-3M831.5 222.5h3M988.5 222.5h-3M831.5 225.5h3M988.5 225.5h-3" stroke="#000" fill="none"/><rect x="831.5" y="110.5" width="157" height="117" stroke="#000" fill="none"/><path d="M831 120.5H988" stroke="#000" fill="none"/><path d="M832.0 120.6 L860.5 120.6 L861.0 125.0 L862.0 180.0 L863.5 217.6 L865.3 217.6 L867.8 204.7 L870.4 191.9 L873.0 181.7 L875.5 174.0 L878.0 166.3 L880.6 159.9 L884.5 152.2 L889.6 145.1 L897.3 138.1 L903.7 134.2 L908.8 129.7 L914.0 127.8 L921.0 125.0 L930.0 123.0 L942.0 121.3 L955.0 120.7 L988.0 120.6" stroke="#000" stroke-width="1.3" fill="none" shape-rendering="auto"/><text x="828" y="123.1" font-family="Liberation Sans" font-weight="bold" font-size="7" text-anchor="end">0</text><text x="828" y="136.5" font-family="Liberation Sans" font-weight="bold" font-size="7" text-anchor="end">-0.5</text><text x="828" y="149.9" font-family="Liberation Sans" font-weight="bold" font-size="7" text-anchor="end">-1</text><text x="828" y="163.3" font-family="Liberation Sans" font-weight="bold" font-size="7" text-anchor="end">-1.5</text><text x="828" y="176.7" font-family="Liberation Sans" font-weight="bold" font-size="7" text-anchor="end">-2</text><text x="828" y="190.1" font-family="Liberation Sans" font-weight="bold" font-size="7" text-anchor="end">-2.5</text><text x="828" y="203.5" font-family="Liberation Sans" font-weight="bold" font-size="7" text-anchor="end">-3</text><text x="828" y="216.89999999999998" font-family="Liberation Sans" font-weight="bold" font-size="7" text-anchor="end">-3.5</text><text x="841.0" y="233.5" font-family="Liberation Sans" font-weight="bold" font-size="7" text-anchor="middle">-0.6</text><text x="865.5" y="233.5" font-family="Liberation Sans" font-weight="bold" font-size="7" text-anchor="middle">-0.5</text><text x="890.0" y="233.5" font-family="Liberation Sans" font-weight="bold" font-size="7" text-anchor="middle">-0.4</text><text x="914.5" y="233.5" font-family="Liberation Sans" font-weight="bold" font-size="7" text-anchor="middle">-0.3</text><text x="939.0" y="233.5" font-family="Liberation Sans" font-weight="bold" font-size="7" text-anchor="middle">-0.2</text><text x="963.5" y="233.5" font-family="Liberation Sans" font-weight="bold" font-size="7" text-anchor="middle">-0.1</text><text x="0" y="0" transform="translate(822,110) rotate(-90)" font-family="Liberation Sans" font-weight="bold" font-size="7" text-anchor="end">[V]</text><text x="988" y="238" font-family="Liberation Sans" font-weight="bold" font-size="7" text-anchor="end">[sec]</text><text x="990" y="228" font-family="Liberation Sans" font-size="7" text-anchor="start">×10</text><text x="1003" y="224" font-family="Liberation Sans" font-size="5" text-anchor="start">-6</text></g></svg><div class="a" style="left:810px;top:244px;width:200px;height:352px;background:#000;border-top:1px solid #808080;border-left:1px solid #808080;border-right:1px solid #fff"></div><div class="a" style="left:856px;top:313px;width:9px;height:7px;background:#00f0c8"></div><div class="a" style="left:868px;top:313px;width:9px;height:7px;background:#00f0a0"></div><div class="a" style="left:880px;top:313px;width:9px;height:7px;background:#00f0a0"></div><div class="a" style="left:892px;top:313px;width:9px;height:7px;background:#00f070"></div><div class="a" style="left:905px;top:313px;width:9px;height:7px;background:#00f020"></div><div class="a" style="left:917px;top:313px;width:9px;height:7px;background:#60f000"></div><div class="a" style="left:929px;top:313px;width:9px;height:7px;background:#60f000"></div><div class="a" style="left:941px;top:313px;width:9px;height:7px;background:#70f000"></div><div class="a" style="left:953px;top:313px;width:9px;height:7px;background:repeating-conic-gradient(#60f000 0 25%,#ffffff 0 50%) 0 0/2px 2px"></div><div class="a" style="left:856px;top:322px;width:9px;height:7px;background:#00f0c0"></div><div class="a" style="left:868px;top:322px;width:9px;height:7px;background:#00f0a0"></div><div class="a" style="left:880px;top:322px;width:9px;height:7px;background:#00f0a0"></div><div class="a" style="left:892px;top:322px;width:9px;height:7px;background:#00f040"></div><div class="a" style="left:905px;top:322px;width:9px;height:7px;background:#40f000"></div><div class="a" style="left:917px;top:322px;width:9px;height:7px;background:#a0f000"></div><div class="a" style="left:929px;top:322px;width:9px;height:7px;background:#ffd000"></div><div class="a" style="left:941px;top:322px;width:9px;height:7px;background:#e0f000"></div><div class="a" style="left:953px;top:322px;width:9px;height:7px;background:#a0f000"></div><div class="a" style="left:856px;top:331px;width:9px;height:7px;background:#00f0c0"></div><div class="a" style="left:868px;top:331px;width:9px;height:7px;background:#00f0c0"></div><div class="a" style="left:880px;top:331px;width:9px;height:7px;background:#00f070"></div><div class="a" style="left:892px;top:331px;width:9px;height:7px;background:#00f000"></div><div class="a" style="left:905px;top:331px;width:9px;height:7px;background:#30f000"></div><div class="a" style="left:917px;top:331px;width:9px;height:7px;background:#d0f000"></div><div class="a" style="left:929px;top:331px;width:9px;height:7px;background:#ffa000"></div><div class="a" style="left:941px;top:331px;width:9px;height:7px;background:#ffa000"></div><div class="a" style="left:953px;top:331px;width:9px;height:7px;background:#d0f000"></div><div class="a" style="left:856px;top:340px;width:9px;height:7px;background:#00f0c0"></div><div class="a" style="left:868px;top:340px;width:9px;height:7px;background:#00f0b0"></div><div class="a" style="left:880px;top:340px;width:9px;height:7px;background:#00f070"></div><div class="a" style="left:892px;top:340px;width:9px;height:7px;background:#00f070"></div><div class="a" style="left:905px;top:340px;width:9px;height:7px;background:#00f000"></div><div class="a" style="left:917px;top:340px;width:9px;height:7px;background:#90f000"></div><div class="a" style="left:929px;top:340px;width:9px;height:7px;background:#f0ff00"></div><div class="a" style="left:941px;top:340px;width:9px;height:7px;background:#d0f000"></div><div class="a" style="left:953px;top:340px;width:9px;height:7px;background:#90f000"></div><div class="a" style="left:856px;top:349px;width:9px;height:7px;background:#00ffe0"></div><div class="a" style="left:868px;top:349px;width:9px;height:7px;background:#00f0c0"></div><div class="a" style="left:880px;top:349px;width:9px;height:7px;background:#00f0a0"></div><div class="a" style="left:892px;top:349px;width:9px;height:7px;background:#00f0b0"></div><div class="a" style="left:905px;top:349px;width:9px;height:7px;background:#00f060"></div><div class="a" style="left:917px;top:349px;width:9px;height:7px;background:#10f000"></div><div class="a" style="left:929px;top:349px;width:9px;height:7px;background:#30f000"></div><div class="a" style="left:941px;top:349px;width:9px;height:7px;background:#40f000"></div><div class="a" style="left:953px;top:349px;width:9px;height:7px;background:#30f000"></div><div class="a" style="left:856px;top:358px;width:9px;height:7px;background:#00f0c0"></div><div class="a" style="left:868px;top:358px;width:9px;height:7px;background:#00f0a0"></div><div class="a" style="left:880px;top:358px;width:9px;height:7px;background:#00f0a0"></div><div class="a" style="left:892px;top:358px;width:9px;height:7px;background:#00f098"></div><div class="a" style="left:905px;top:358px;width:9px;height:7px;background:#00f080"></div><div class="a" style="left:917px;top:358px;width:9px;height:7px;background:#00f080"></div><div class="a" style="left:929px;top:358px;width:9px;height:7px;background:#00f040"></div><div class="a" style="left:941px;top:358px;width:9px;height:7px;background:#00f020"></div><div class="a" style="left:953px;top:358px;width:9px;height:7px;background:#00f070"></div><div class="a" style="left:856px;top:367px;width:9px;height:7px;background:#00f0d0"></div><div class="a" style="left:868px;top:367px;width:9px;height:7px;background:#00f0b0"></div><div class="a" style="left:880px;top:367px;width:9px;height:7px;background:#00f0a0"></div><div class="a" style="left:892px;top:367px;width:9px;height:7px;background:#00f0a0"></div><div class="a" style="left:905px;top:367px;width:9px;height:7px;background:#00f080"></div><div class="a" style="left:917px;top:367px;width:9px;height:7px;background:#00f080"></div><div class="a" style="left:929px;top:367px;width:9px;height:7px;background:#00f060"></div><div class="a" style="left:941px;top:367px;width:9px;height:7px;background:#00f050"></div><div class="a" style="left:953px;top:367px;width:9px;height:7px;background:#00f080"></div><div class="a" style="left:856px;top:376px;width:9px;height:7px;background:#00f0c0"></div><div class="a" style="left:868px;top:376px;width:9px;height:7px;background:#00a0ff"></div><div class="a" style="left:880px;top:376px;width:9px;height:7px;background:#00ffff"></div><div class="a" style="left:892px;top:376px;width:9px;height:7px;background:#00f0d0"></div><div class="a" style="left:905px;top:376px;width:9px;height:7px;background:#00f0b0"></div><div class="a" style="left:917px;top:376px;width:9px;height:7px;background:#00f0b0"></div><div class="a" style="left:929px;top:376px;width:9px;height:7px;background:#00f000"></div><div class="a" style="left:941px;top:376px;width:9px;height:7px;background:#00f080"></div><div class="a" style="left:953px;top:376px;width:9px;height:7px;background:#00f080"></div><div class="a" style="left:856px;top:385px;width:9px;height:7px;background:#00a0ff"></div><div class="a" style="left:868px;top:385px;width:9px;height:7px;background:#00e0ff"></div><div class="a" style="left:880px;top:385px;width:9px;height:7px;background:#00ffff"></div><div class="a" style="left:892px;top:385px;width:9px;height:7px;background:#00ffff"></div><div class="a" style="left:905px;top:385px;width:9px;height:7px;background:#00ffff"></div><div class="a" style="left:917px;top:385px;width:9px;height:7px;background:#00f0d0"></div><div class="a" style="left:929px;top:385px;width:9px;height:7px;background:#00e0ff"></div><div class="a" style="left:941px;top:385px;width:9px;height:7px;background:#00e0ff"></div><div class="a" style="left:953px;top:385px;width:9px;height:7px;background:#00e8ff"></div><div class="a" style="left:856px;top:394px;width:9px;height:7px;background:#00e0ff"></div><div class="a" style="left:868px;top:394px;width:9px;height:7px;background:#00e0ff"></div><div class="a" style="left:880px;top:394px;width:9px;height:7px;background:#0090ff"></div><div class="a" style="left:892px;top:394px;width:9px;height:7px;background:#00c8ff"></div><div class="a" style="left:905px;top:394px;width:9px;height:7px;background:#00e0ff"></div><div class="a" style="left:917px;top:394px;width:9px;height:7px;background:#00ffff"></div><div class="a" style="left:929px;top:394px;width:9px;height:7px;background:#00c8ff"></div><div class="a" style="left:941px;top:394px;width:9px;height:7px;background:#00f0ff"></div><div class="a" style="left:953px;top:394px;width:9px;height:7px;background:#00f0ff"></div><div class="a" style="left:856px;top:403px;width:9px;height:7px;background:#00c8ff"></div><div class="a" style="left:868px;top:403px;width:9px;height:7px;background:#00c8ff"></div><div class="a" style="left:880px;top:403px;width:9px;height:7px;background:#00c8ff"></div><div class="a" style="left:892px;top:403px;width:9px;height:7px;background:#00a0ff"></div><div class="a" style="left:905px;top:403px;width:9px;height:7px;background:#00b0ff"></div><div class="a" style="left:917px;top:403px;width:9px;height:7px;background:#00a0ff"></div><div class="a" style="left:929px;top:403px;width:9px;height:7px;background:#00f0ff"></div><div class="a" style="left:941px;top:403px;width:9px;height:7px;background:#00f0ff"></div><div class="a" style="left:953px;top:403px;width:9px;height:7px;background:#00b8ff"></div><div class="a" style="left:856px;top:412px;width:9px;height:7px;background:#0060ff"></div><div class="a" style="left:868px;top:412px;width:9px;height:7px;background:#00c0ff"></div><div class="a" style="left:880px;top:412px;width:9px;height:7px;background:#00e0ff"></div><div class="a" style="left:892px;top:412px;width:9px;height:7px;background:#2000ff"></div><div class="a" style="left:905px;top:412px;width:9px;height:7px;background:#00c8ff"></div><div class="a" style="left:917px;top:412px;width:9px;height:7px;background:#00e0ff"></div><div class="a" style="left:929px;top:412px;width:9px;height:7px;background:#0080ff"></div><div class="a" style="left:941px;top:412px;width:9px;height:7px;background:#00d0ff"></div><div class="a" style="left:953px;top:412px;width:9px;height:7px;background:#0090ff"></div><div class="a" style="left:856px;top:421px;width:9px;height:7px;background:#00a0ff"></div><div class="a" style="left:868px;top:421px;width:9px;height:7px;background:#00a0ff"></div><div class="a" style="left:880px;top:421px;width:9px;height:7px;background:#0070ff"></div><div class="a" style="left:892px;top:421px;width:9px;height:7px;background:#00a0ff"></div><div class="a" style="left:905px;top:421px;width:9px;height:7px;background:#0090ff"></div><div class="a" style="left:917px;top:421px;width:9px;height:7px;background:#00a0ff"></div><div class="a" style="left:929px;top:421px;width:9px;height:7px;background:#0090ff"></div><div class="a" style="left:941px;top:421px;width:9px;height:7px;background:#0090ff"></div><div class="a" style="left:953px;top:421px;width:9px;height:7px;background:#00d0ff"></div><div class="a" style="left:856px;top:430px;width:9px;height:7px;background:#0090ff"></div><div class="a" style="left:868px;top:430px;width:9px;height:7px;background:#0020ff"></div><div class="a" style="left:880px;top:430px;width:9px;height:7px;background:#0060ff"></div><div class="a" style="left:892px;top:430px;width:9px;height:7px;background:#0050ff"></div><div class="a" style="left:905px;top:430px;width:9px;height:7px;background:#9000ff"></div><div class="a" style="left:917px;top:430px;width:9px;height:7px;background:#0090ff"></div><div class="a" style="left:929px;top:430px;width:9px;height:7px;background:#0050ff"></div><div class="a" style="left:941px;top:430px;width:9px;height:7px;background:#0050ff"></div><div class="a" style="left:953px;top:430px;width:9px;height:7px;background:#0070ff"></div><div class="a" style="left:856px;top:439px;width:9px;height:7px;background:#9000ff"></div><div class="a" style="left:868px;top:439px;width:9px;height:7px;background:#0010ff"></div><div class="a" style="left:880px;top:439px;width:9px;height:7px;background:#9000ff"></div><div class="a" style="left:892px;top:439px;width:9px;height:7px;background:#7000ff"></div><div class="a" style="left:905px;top:439px;width:9px;height:7px;background:#0050ff"></div><div class="a" style="left:917px;top:439px;width:9px;height:7px;background:#2000ff"></div><div class="a" style="left:929px;top:439px;width:9px;height:7px;background:#0090ff"></div><div class="a" style="left:941px;top:439px;width:9px;height:7px;background:#9000ff"></div><div class="a" style="left:953px;top:439px;width:9px;height:7px;background:#0050ff"></div><div class="a" style="left:856px;top:448px;width:9px;height:7px;background:#0080ff"></div><div class="a" style="left:868px;top:448px;width:9px;height:7px;background:#9000ff"></div><div class="a" style="left:880px;top:448px;width:9px;height:7px;background:#0080ff"></div><div class="a" style="left:892px;top:448px;width:9px;height:7px;background:#0000ff"></div><div class="a" style="left:905px;top:448px;width:9px;height:7px;background:#0050ff"></div><div class="a" style="left:917px;top:448px;width:9px;height:7px;background:#2000ff"></div><div class="a" style="left:929px;top:448px;width:9px;height:7px;background:#5000ff"></div><div class="a" style="left:941px;top:448px;width:9px;height:7px;background:#0070ff"></div><div class="a" style="left:953px;top:448px;width:9px;height:7px;background:#9000ff"></div><div class="a" style="left:856px;top:457px;width:9px;height:7px;background:#0020ff"></div><div class="a" style="left:868px;top:457px;width:9px;height:7px;background:#0070ff"></div><div class="a" style="left:880px;top:457px;width:9px;height:7px;background:#9000ff"></div><div class="a" style="left:892px;top:457px;width:9px;height:7px;background:#0040ff"></div><div class="a" style="left:905px;top:457px;width:9px;height:7px;background:#6000ff"></div><div class="a" style="left:917px;top:457px;width:9px;height:7px;background:#0000ff"></div><div class="a" style="left:929px;top:457px;width:9px;height:7px;background:#2000ff"></div><div class="a" style="left:941px;top:457px;width:9px;height:7px;background:#0020ff"></div><div class="a" style="left:953px;top:457px;width:9px;height:7px;background:#0040ff"></div><div class="a" style="left:856px;top:466px;width:9px;height:7px;background:#4000ff"></div><div class="a" style="left:868px;top:466px;width:9px;height:7px;background:#9000ff"></div><div class="a" style="left:880px;top:466px;width:9px;height:7px;background:#9000ff"></div><div class="a" style="left:892px;top:466px;width:9px;height:7px;background:#9000ff"></div><div class="a" style="left:905px;top:466px;width:9px;height:7px;background:#2000ff"></div><div class="a" style="left:917px;top:466px;width:9px;height:7px;background:#9000ff"></div><div class="a" style="left:929px;top:466px;width:9px;height:7px;background:#0000ff"></div><div class="a" style="left:941px;top:466px;width:9px;height:7px;background:#0040ff"></div><div class="a" style="left:953px;top:466px;width:9px;height:7px;background:#9000ff"></div><div class="a" style="left:856px;top:475px;width:9px;height:7px;background:#0050ff"></div><div class="a" style="left:868px;top:475px;width:9px;height:7px;background:#3000ff"></div><div class="a" style="left:880px;top:475px;width:9px;height:7px;background:#9000ff"></div><div class="a" style="left:892px;top:475px;width:9px;height:7px;background:#9000ff"></div><div class="a" style="left:905px;top:475px;width:9px;height:7px;background:#9000ff"></div><div class="a" style="left:917px;top:475px;width:9px;height:7px;background:#0050ff"></div><div class="a" style="left:929px;top:475px;width:9px;height:7px;background:#9000ff"></div><div class="a" style="left:941px;top:475px;width:9px;height:7px;background:#0050ff"></div><div class="a" style="left:953px;top:475px;width:9px;height:7px;background:#0010ff"></div><div class="a" style="left:856px;top:484px;width:9px;height:7px;background:#2000ff"></div><div class="a" style="left:868px;top:484px;width:9px;height:7px;background:#1000ff"></div><div class="a" style="left:880px;top:484px;width:9px;height:7px;background:#9000ff"></div><div class="a" style="left:892px;top:484px;width:9px;height:7px;background:#9000ff"></div><div class="a" style="left:905px;top:484px;width:9px;height:7px;background:#9000ff"></div><div class="a" style="left:917px;top:484px;width:9px;height:7px;background:#5000ff"></div><div class="a" style="left:929px;top:484px;width:9px;height:7px;background:#9000ff"></div><div class="a" style="left:941px;top:484px;width:9px;height:7px;background:#0000ff"></div><div class="a" style="left:953px;top:484px;width:9px;height:7px;background:#6000ff"></div><div class="a" style="left:856px;top:493px;width:9px;height:7px;background:#9000ff"></div><div class="a" style="left:868px;top:493px;width:9px;height:7px;background:#9000ff"></div><div class="a" style="left:880px;top:493px;width:9px;height:7px;background:#9000ff"></div><div class="a" style="left:892px;top:493px;width:9px;height:7px;background:#9000ff"></div><div class="a" style="left:905px;top:493px;width:9px;height:7px;background:#9000ff"></div><div class="a" style="left:917px;top:493px;width:9px;height:7px;background:#9000ff"></div><div class="a" style="left:929px;top:493px;width:9px;height:7px;background:#9000ff"></div><div class="a" style="left:941px;top:493px;width:9px;height:7px;background:#5000ff"></div><div class="a" style="left:953px;top:493px;width:9px;height:7px;background:#6000ff"></div><div class="a" style="left:856px;top:502px;width:9px;height:7px;background:#0040ff"></div><div class="a" style="left:868px;top:502px;width:9px;height:7px;background:#9000ff"></div><div class="a" style="left:880px;top:502px;width:9px;height:7px;background:#3000ff"></div><div class="a" style="left:892px;top:502px;width:9px;height:7px;background:#0040ff"></div><div class="a" style="left:905px;top:502px;width:9px;height:7px;background:#0010ff"></div><div class="a" style="left:917px;top:502px;width:9px;height:7px;background:#0060ff"></div><div class="a" style="left:929px;top:502px;width:9px;height:7px;background:#3000ff"></div><div class="a" style="left:941px;top:502px;width:9px;height:7px;background:#9000ff"></div><div class="a" style="left:953px;top:502px;width:9px;height:7px;background:#0000ff"></div><div class="a" style="left:856px;top:511px;width:9px;height:7px;background:#3000ff"></div><div class="a" style="left:868px;top:511px;width:9px;height:7px;background:#0090ff"></div><div class="a" style="left:880px;top:511px;width:9px;height:7px;background:#0040ff"></div><div class="a" style="left:892px;top:511px;width:9px;height:7px;background:#0000ff"></div><div class="a" style="left:905px;top:511px;width:9px;height:7px;background:#0060ff"></div><div class="a" style="left:917px;top:511px;width:9px;height:7px;background:#1000ff"></div><div class="a" style="left:929px;top:511px;width:9px;height:7px;background:#0030ff"></div><div class="a" style="left:941px;top:511px;width:9px;height:7px;background:#0070ff"></div><div class="a" style="left:953px;top:511px;width:9px;height:7px;background:#0040ff"></div><div class="a" style="left:856px;top:520px;width:9px;height:7px;background:#9000ff"></div><div class="a" style="left:868px;top:520px;width:9px;height:7px;background:#4000ff"></div><div class="a" style="left:880px;top:520px;width:9px;height:7px;background:#9000ff"></div><div class="a" style="left:892px;top:520px;width:9px;height:7px;background:#0000ff"></div><div class="a" style="left:905px;top:520px;width:9px;height:7px;background:#9000ff"></div><div class="a" style="left:917px;top:520px;width:9px;height:7px;background:#9000ff"></div><div class="a" style="left:929px;top:520px;width:9px;height:7px;background:#4000ff"></div><div class="a" style="left:941px;top:520px;width:9px;height:7px;background:#4000ff"></div><div class="a" style="left:953px;top:520px;width:9px;height:7px;background:#9000ff"></div><div class="a" style="left:810px;top:596px;width:200px;height:2px;background:#fff"></div><div class="a" style="left:811px;top:597px;width:17px;height:23px;background:#c8beb4;border-top:1px solid #fff;border-left:1px solid #fff;border-right:1px solid #000;border-bottom:1px solid #000;font-size:13px;line-height:21px;text-align:center">I</div><div class="a" style="left:829px;top:597px;width:18px;height:23px;background:#c8beb4;border-top:1px solid #fff;border-left:1px solid #fff;border-right:1px solid #000;border-bottom:1px solid #000;font-size:13px;line-height:21px;text-align:center">O</div><div class="a" style="left:847px;top:597px;width:16px;height:23px;background:#c8beb4;border-top:1px solid #fff;border-left:1px solid #fff;border-right:1px solid #000;border-bottom:1px solid #000;font-size:13px;line-height:21px;text-align:center">U</div><div class="a" style="left:863px;top:597px;width:18px;height:23px;background:#c8beb4;border-top:1px solid #fff;border-left:1px solid #fff;border-right:1px solid #000;border-bottom:1px solid #000;font-size:13px;line-height:21px;text-align:center">D</div><div class="a" style="left:881px;top:597px;width:15px;height:23px;background:#c8beb4;border-top:1px solid #fff;border-left:1px solid #fff;border-right:1px solid #000;border-bottom:1px solid #000;font-size:13px;line-height:21px;text-align:center">T</div><div class="a" style="left:896px;top:597px;width:15px;height:23px;background:#c8beb4;border-top:1px solid #fff;border-left:1px solid #fff;border-right:1px solid #000;border-bottom:1px solid #000;font-size:13px;line-height:21px;text-align:center">B</div><div class="a" style="left:913px;top:597px;width:30px;height:23px;background:#505050;border-top:1px solid #fff;border-left:1px solid #fff;border-right:1px solid #000;border-bottom:1px solid #000;box-shadow:inset 1px 1px 0 #c0c0c0,inset -1px -1px 0 #505050;font-size:12.5px;line-height:20px;text-align:center;color:#000">sum</div><div class="a" style="left:953px;top:598px;width:43px;height:22px;background:#fff;border-top:1px solid #808080;border-left:1px solid #808080;border-right:1px solid #fff;border-bottom:1px solid #fff;box-shadow:inset 1px 1px 0 #000,inset -1px -1px 0 #d0d0d0"></div><div class="a" style="left:955px;top:602px;font-size:13px;line-height:14px;white-space:nowrap;width:36px;text-align:right">0</div><div class="a" style="left:996px;top:598px;width:14px;height:11px;background:#c0c0c0;border-top:1px solid #fff;border-left:1px solid #fff;border-right:1px solid #000;border-bottom:1px solid #000"></div><div class="a" style="left:996px;top:609px;width:14px;height:11px;background:#c0c0c0;border-top:1px solid #fff;border-left:1px solid #fff;border-right:1px solid #000;border-bottom:1px solid #000"></div><svg width="1022" height="858" style="position:absolute;left:0;top:0"><path d="M999 605h7l-3.5-4zM999 612h7l-3.5 4z" fill="#000"/></svg><div class="a" style="left:811px;top:641px;width:196px;height:188px;border-top:1px solid #fff;border-left:1px solid #fff;border-right:2px solid #000;border-bottom:2px solid #000"></div><div class="a" style="left:811px;top:620px;width:46px;height:22px;background:#c0c0c0;border-top:1px solid #fff;border-left:1px solid #fff;border-right:1px solid #000;border-radius:3px 2px 0 0;font-size:12.5px;line-height:20px;padding-left:5px;white-space:nowrap">Q/T</div><div class="a" style="left:858px;top:623px;width:44px;height:18px;background:#c0c0c0;border-top:1px solid #fff;border-left:1px solid #fff;border-right:1px solid #000;border-radius:3px 2px 0 0;font-size:12.5px;line-height:16px;padding-left:5px;white-space:nowrap">Fit</div><div class="a" style="left:902px;top:623px;width:45px;height:18px;background:#c0c0c0;border-top:1px solid #fff;border-left:1px solid #fff;border-right:1px solid #000;border-radius:3px 2px 0 0;font-size:12.5px;line-height:16px;padding-left:5px;white-space:nowrap">Filter</div><div class="a" style="left:947px;top:623px;width:55px;height:18px;background:#c0c0c0;border-top:1px solid #fff;border-left:1px solid #fff;border-right:1px solid #000;border-radius:3px 2px 0 0;font-size:12.5px;line-height:16px;padding-left:5px;white-space:nowrap">Spectra</div><div class="a" style="left:813px;top:664px;width:189px;height:147px;border-top:1px solid #fff;border-left:1px solid #fff;border-right:2px solid #000;border-bottom:2px solid #000"></div><div class="a" style="left:813px;top:644px;width:55px;height:21px;background:#c0c0c0;border-top:1px solid #fff;border-left:1px solid #fff;border-right:1px solid #000;border-radius:3px 2px 0 0;font-size:12.5px;line-height:19px;padding-left:5px;white-space:nowrap">Charge</div><div class="a" style="left:868px;top:646px;width:44px;height:18px;background:#c0c0c0;border-top:1px solid #fff;border-left:1px solid #fff;border-right:1px solid #000;border-radius:3px 2px 0 0;font-size:12.5px;line-height:16px;padding-left:5px;white-space:nowrap">Time</div><div class="a" style="left:816px;top:673px;font-size:12.7px;line-height:14px;white-space:nowrap;">Q[pC]</div><div class="a" style="left:849px;top:670px;width:142px;height:22px;background:#fff;border-top:1px solid #808080;border-left:1px solid #808080;border-right:1px solid #fff;border-bottom:1px solid #fff;box-shadow:inset 1px 1px 0 #000,inset -1px -1px 0 #d0d0d0"></div><div class="a" style="left:851px;top:674px;font-size:12.7px;line-height:14px;white-space:nowrap;width:135px;text-align:right">35.7413</div><div class="a" style="left:816px;top:695px;font-size:12.7px;line-height:14px;white-space:nowrap;">NPhe</div><div class="a" style="left:849px;top:692px;width:142px;height:22px;background:#fff;border-top:1px solid #808080;border-left:1px solid #808080;border-right:1px solid #fff;border-bottom:1px solid #fff;box-shadow:inset 1px 1px 0 #000,inset -1px -1px 0 #d0d0d0"></div><div class="a" style="left:851px;top:696px;font-size:12.7px;line-height:14px;white-space:nowrap;width:135px;text-align:right">398.029</div><div class="a" style="left:816px;top:717px;font-size:12.7px;line-height:14px;white-space:nowrap;">NPho</div><div class="a" style="left:849px;top:714px;width:142px;height:22px;background:#fff;border-top:1px solid #808080;border-left:1px solid #808080;border-right:1px solid #fff;border-bottom:1px solid #fff;box-shadow:inset 1px 1px 0 #000,inset -1px -1px 0 #d0d0d0"></div><div class="a" style="left:851px;top:718px;font-size:12.7px;line-height:14px;white-space:nowrap;width:135px;text-align:right">2414.52</div><div class="a" style="left:814px;top:744px;font-size:12.7px;line-height:14px;white-space:nowrap;">Integral range[ns]</div><div class="a" style="left:911px;top:740px;width:29px;height:22px;background:#fff;border-top:1px solid #808080;border-left:1px solid #808080;border-right:1px solid #fff;border-bottom:1px solid #fff;box-shadow:inset 1px 1px 0 #000,inset -1px -1px 0 #d0d0d0"></div><div class="a" style="left:913px;top:744px;font-size:12.7px;line-height:14px;white-space:nowrap;width:22px;text-align:right">0</div><div class="a" style="left:940px;top:740px;width:14px;height:11px;background:#c0c0c0;border-top:1px solid #fff;border-left:1px solid #fff;border-right:1px solid #000;border-bottom:1px solid #000"></div><div class="a" style="left:940px;top:751px;width:14px;height:11px;background:#c0c0c0;border-top:1px solid #fff;border-left:1px solid #fff;border-right:1px solid #000;border-bottom:1px solid #000"></div><svg width="1022" height="858" style="position:absolute;left:0;top:0"><path d="M943 747h7l-3.5-4zM943 754h7l-3.5 4z" fill="#000"/></svg><div class="a" style="left:956px;top:740px;width:29px;height:22px;background:#fff;border-top:1px solid #808080;border-left:1px solid #808080;border-right:1px solid #fff;border-bottom:1px solid #fff;box-shadow:inset 1px 1px 0 #000,inset -1px -1px 0 #d0d0d0"></div><div class="a" style="left:958px;top:744px;font-size:12.7px;line-height:14px;white-space:nowrap;width:22px;text-align:right">0</div><div class="a" style="left:985px;top:740px;width:14px;height:11px;background:#c0c0c0;border-top:1px solid #fff;border-left:1px solid #fff;border-right:1px solid #000;border-bottom:1px solid #000"></div><div class="a" style="left:985px;top:751px;width:14px;height:11px;background:#c0c0c0;border-top:1px solid #fff;border-left:1px solid #fff;border-right:1px solid #000;border-bottom:1px solid #000"></div><svg width="1022" height="858" style="position:absolute;left:0;top:0"><path d="M988 747h7l-3.5-4zM988 754h7l-3.5 4z" fill="#000"/></svg><div class="a" style="left:815px;top:769px;width:13px;height:13px;background:#fff;border-top:1px solid #808080;border-left:1px solid #808080;border-right:1px solid #fff;border-bottom:1px solid #fff;box-shadow:inset 1px 1px 0 #000"></div><div class="a" style="left:834px;top:768px;font-size:12.7px;line-height:14px;white-space:nowrap;">On tab analysis</div></body></html>
